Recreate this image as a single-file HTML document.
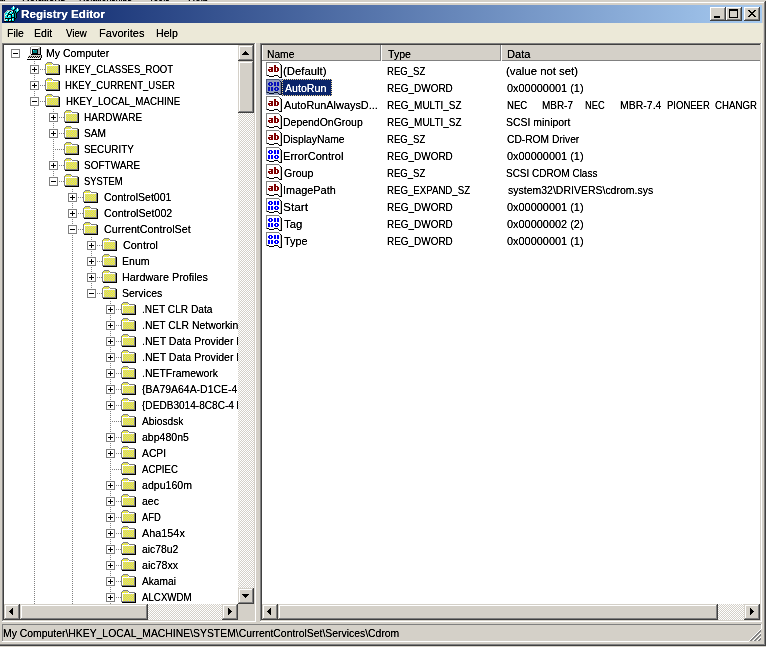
<!DOCTYPE html><html><head><meta charset="utf-8"><style>html,body{margin:0;padding:0;}body{width:766px;height:647px;overflow:hidden;position:relative;background:#D4D0C8;}.t{position:absolute;white-space:pre;transform-origin:0 0;filter:url(#tb);font-family:"Liberation Sans",sans-serif;font-size:11px;color:#000;}svg{position:absolute;left:0;top:0;}</style></head><body><svg width="766" height="647" viewBox="0 0 766 647" shape-rendering="crispEdges"><rect x="0" y="0" width="766" height="647" fill="#D4D0C8"/><rect x="0" y="2" width="764" height="1" fill="#FFFFFF"/><rect x="764" y="2" width="1" height="643" fill="#808080"/><rect x="765" y="1" width="1" height="645" fill="#404040"/><rect x="0" y="644" width="765" height="1" fill="#808080"/><rect x="0" y="645" width="766" height="1" fill="#404040"/><defs><linearGradient id="tg" x1="0" x2="1" y1="0" y2="0"><stop offset="0" stop-color="#0A246A"/><stop offset="1" stop-color="#A6CAF0"/></linearGradient><pattern id="dots" width="2" height="2" patternUnits="userSpaceOnUse"><rect x="1" y="0" width="1" height="1" fill="#808080"/><rect x="0" y="1" width="1" height="1" fill="#808080"/></pattern><pattern id="vd" width="2" height="2" patternUnits="userSpaceOnUse"><rect x="0" y="1" width="2" height="1" fill="#808080"/></pattern><pattern id="hdE" width="2" height="2" patternUnits="userSpaceOnUse"><rect x="0" y="0" width="1" height="2" fill="#808080"/></pattern><pattern id="hdO" width="2" height="2" patternUnits="userSpaceOnUse"><rect x="1" y="0" width="1" height="2" fill="#808080"/></pattern><pattern id="chk" width="2" height="2" patternUnits="userSpaceOnUse"><rect width="2" height="2" fill="#D4D0C8"/><rect x="0" y="0" width="1" height="1" fill="#fff"/><rect x="1" y="1" width="1" height="1" fill="#fff"/></pattern><pattern id="ychk" width="2" height="2" patternUnits="userSpaceOnUse"><rect width="2" height="2" fill="#C0C0C0"/><rect x="1" y="0" width="1" height="1" fill="#FFFF00"/><rect x="0" y="1" width="1" height="1" fill="#FFFF00"/></pattern><filter id="tb" x="0" y="0" width="100%" height="100%" color-interpolation-filters="sRGB"><feComponentTransfer><feFuncA type="linear" slope="1.5" intercept="-0.05"/></feComponentTransfer></filter></defs><rect x="2" y="5" width="760" height="18" fill="url(#tg)"/><rect x="13" y="6" width="1" height="1" fill="#F0FFFF"/><rect x="12" y="7" width="1" height="1" fill="#00E0E0"/><rect x="13" y="7" width="1" height="1" fill="#F0FFFF"/><rect x="14" y="7" width="1" height="1" fill="#00E0E0"/><rect x="11" y="8" width="1" height="1" fill="#00E0E0"/><rect x="12" y="8" width="1" height="1" fill="#00E0E0"/><rect x="13" y="8" width="1" height="1" fill="#F0FFFF"/><rect x="14" y="8" width="1" height="1" fill="#00E0E0"/><rect x="15" y="8" width="1" height="1" fill="#000000"/><rect x="17" y="8" width="1" height="1" fill="#F0FFFF"/><rect x="12" y="9" width="1" height="1" fill="#00E0E0"/><rect x="13" y="9" width="1" height="1" fill="#00E0E0"/><rect x="14" y="9" width="1" height="1" fill="#000000"/><rect x="16" y="9" width="1" height="1" fill="#00E0E0"/><rect x="17" y="9" width="1" height="1" fill="#F0FFFF"/><rect x="18" y="9" width="1" height="1" fill="#00E0E0"/><rect x="7" y="10" width="1" height="1" fill="#C8B8B0"/><rect x="8" y="10" width="1" height="1" fill="#C8B8B0"/><rect x="9" y="10" width="1" height="1" fill="#C8B8B0"/><rect x="10" y="10" width="1" height="1" fill="#C8B8B0"/><rect x="11" y="10" width="1" height="1" fill="#C8B8B0"/><rect x="13" y="10" width="1" height="1" fill="#000000"/><rect x="15" y="10" width="1" height="1" fill="#00E0E0"/><rect x="16" y="10" width="1" height="1" fill="#00E0E0"/><rect x="17" y="10" width="1" height="1" fill="#F0FFFF"/><rect x="18" y="10" width="1" height="1" fill="#00E0E0"/><rect x="19" y="10" width="1" height="1" fill="#000000"/><rect x="6" y="11" width="1" height="1" fill="#C8B8B0"/><rect x="7" y="11" width="1" height="1" fill="#00E0E0"/><rect x="8" y="11" width="1" height="1" fill="#F0FFFF"/><rect x="9" y="11" width="1" height="1" fill="#00E0E0"/><rect x="10" y="11" width="1" height="1" fill="#000000"/><rect x="11" y="11" width="1" height="1" fill="#00E0E0"/><rect x="12" y="11" width="1" height="1" fill="#F0FFFF"/><rect x="13" y="11" width="1" height="1" fill="#000000"/><rect x="14" y="11" width="1" height="1" fill="#009090"/><rect x="15" y="11" width="1" height="1" fill="#000000"/><rect x="16" y="11" width="1" height="1" fill="#00E0E0"/><rect x="17" y="11" width="1" height="1" fill="#00E0E0"/><rect x="18" y="11" width="1" height="1" fill="#000000"/><rect x="5" y="12" width="1" height="1" fill="#C8B8B0"/><rect x="6" y="12" width="1" height="1" fill="#00E0E0"/><rect x="7" y="12" width="1" height="1" fill="#F0FFFF"/><rect x="8" y="12" width="1" height="1" fill="#00E0E0"/><rect x="9" y="12" width="1" height="1" fill="#000000"/><rect x="10" y="12" width="1" height="1" fill="#F0FFFF"/><rect x="11" y="12" width="1" height="1" fill="#00E0E0"/><rect x="12" y="12" width="1" height="1" fill="#00E0E0"/><rect x="13" y="12" width="1" height="1" fill="#000000"/><rect x="14" y="12" width="1" height="1" fill="#009090"/><rect x="15" y="12" width="1" height="1" fill="#000000"/><rect x="16" y="12" width="1" height="1" fill="#009090"/><rect x="17" y="12" width="1" height="1" fill="#000000"/><rect x="4" y="13" width="1" height="1" fill="#C8B8B0"/><rect x="5" y="13" width="1" height="1" fill="#00E0E0"/><rect x="6" y="13" width="1" height="1" fill="#00E0E0"/><rect x="7" y="13" width="1" height="1" fill="#00E0E0"/><rect x="8" y="13" width="1" height="1" fill="#000000"/><rect x="9" y="13" width="1" height="1" fill="#00E0E0"/><rect x="10" y="13" width="1" height="1" fill="#00E0E0"/><rect x="11" y="13" width="1" height="1" fill="#00E0E0"/><rect x="12" y="13" width="1" height="1" fill="#000000"/><rect x="13" y="13" width="1" height="1" fill="#009090"/><rect x="14" y="13" width="1" height="1" fill="#000000"/><rect x="15" y="13" width="1" height="1" fill="#009090"/><rect x="16" y="13" width="1" height="1" fill="#000000"/><rect x="4" y="14" width="1" height="1" fill="#C8B8B0"/><rect x="5" y="14" width="1" height="1" fill="#00E0E0"/><rect x="6" y="14" width="1" height="1" fill="#F0FFFF"/><rect x="7" y="14" width="1" height="1" fill="#00E0E0"/><rect x="8" y="14" width="1" height="1" fill="#000000"/><rect x="9" y="14" width="1" height="1" fill="#000000"/><rect x="10" y="14" width="1" height="1" fill="#000000"/><rect x="11" y="14" width="1" height="1" fill="#000000"/><rect x="12" y="14" width="1" height="1" fill="#F0FFFF"/><rect x="13" y="14" width="1" height="1" fill="#00E0E0"/><rect x="14" y="14" width="1" height="1" fill="#000000"/><rect x="15" y="14" width="1" height="1" fill="#009090"/><rect x="16" y="14" width="1" height="1" fill="#000000"/><rect x="4" y="15" width="1" height="1" fill="#C8B8B0"/><rect x="5" y="15" width="1" height="1" fill="#F0FFFF"/><rect x="6" y="15" width="1" height="1" fill="#00E0E0"/><rect x="7" y="15" width="1" height="1" fill="#000000"/><rect x="8" y="15" width="1" height="1" fill="#00E0E0"/><rect x="9" y="15" width="1" height="1" fill="#F0FFFF"/><rect x="10" y="15" width="1" height="1" fill="#00E0E0"/><rect x="11" y="15" width="1" height="1" fill="#000000"/><rect x="12" y="15" width="1" height="1" fill="#00E0E0"/><rect x="13" y="15" width="1" height="1" fill="#00E0E0"/><rect x="14" y="15" width="1" height="1" fill="#000000"/><rect x="15" y="15" width="1" height="1" fill="#009090"/><rect x="16" y="15" width="1" height="1" fill="#000000"/><rect x="4" y="16" width="1" height="1" fill="#C8B8B0"/><rect x="5" y="16" width="1" height="1" fill="#00E0E0"/><rect x="6" y="16" width="1" height="1" fill="#00E0E0"/><rect x="7" y="16" width="1" height="1" fill="#000000"/><rect x="8" y="16" width="1" height="1" fill="#F0FFFF"/><rect x="9" y="16" width="1" height="1" fill="#00E0E0"/><rect x="10" y="16" width="1" height="1" fill="#00E0E0"/><rect x="11" y="16" width="1" height="1" fill="#000000"/><rect x="12" y="16" width="1" height="1" fill="#00E0E0"/><rect x="13" y="16" width="1" height="1" fill="#00E0E0"/><rect x="14" y="16" width="1" height="1" fill="#000000"/><rect x="15" y="16" width="1" height="1" fill="#009090"/><rect x="16" y="16" width="1" height="1" fill="#000000"/><rect x="4" y="17" width="1" height="1" fill="#C8B8B0"/><rect x="5" y="17" width="1" height="1" fill="#00E0E0"/><rect x="6" y="17" width="1" height="1" fill="#00E0E0"/><rect x="7" y="17" width="1" height="1" fill="#00E0E0"/><rect x="8" y="17" width="1" height="1" fill="#00E0E0"/><rect x="9" y="17" width="1" height="1" fill="#00E0E0"/><rect x="10" y="17" width="1" height="1" fill="#00E0E0"/><rect x="11" y="17" width="1" height="1" fill="#000000"/><rect x="12" y="17" width="1" height="1" fill="#000000"/><rect x="13" y="17" width="1" height="1" fill="#000000"/><rect x="14" y="17" width="1" height="1" fill="#000000"/><rect x="15" y="17" width="1" height="1" fill="#009090"/><rect x="16" y="17" width="1" height="1" fill="#000000"/><rect x="4" y="18" width="1" height="1" fill="#C8B8B0"/><rect x="5" y="18" width="1" height="1" fill="#000000"/><rect x="6" y="18" width="1" height="1" fill="#000000"/><rect x="7" y="18" width="1" height="1" fill="#000000"/><rect x="8" y="18" width="1" height="1" fill="#000000"/><rect x="9" y="18" width="1" height="1" fill="#000000"/><rect x="10" y="18" width="1" height="1" fill="#000000"/><rect x="11" y="18" width="1" height="1" fill="#000000"/><rect x="12" y="18" width="1" height="1" fill="#00E0E0"/><rect x="13" y="18" width="1" height="1" fill="#00E0E0"/><rect x="14" y="18" width="1" height="1" fill="#000000"/><rect x="15" y="18" width="1" height="1" fill="#000000"/><rect x="4" y="19" width="1" height="1" fill="#C8B8B0"/><rect x="5" y="19" width="1" height="1" fill="#00E0E0"/><rect x="6" y="19" width="1" height="1" fill="#F0FFFF"/><rect x="7" y="19" width="1" height="1" fill="#00E0E0"/><rect x="8" y="19" width="1" height="1" fill="#000000"/><rect x="9" y="19" width="1" height="1" fill="#00E0E0"/><rect x="10" y="19" width="1" height="1" fill="#F0FFFF"/><rect x="11" y="19" width="1" height="1" fill="#000000"/><rect x="12" y="19" width="1" height="1" fill="#F0FFFF"/><rect x="13" y="19" width="1" height="1" fill="#00E0E0"/><rect x="14" y="19" width="1" height="1" fill="#000000"/><rect x="4" y="20" width="1" height="1" fill="#C8B8B0"/><rect x="5" y="20" width="1" height="1" fill="#F0FFFF"/><rect x="6" y="20" width="1" height="1" fill="#00E0E0"/><rect x="7" y="20" width="1" height="1" fill="#00E0E0"/><rect x="8" y="20" width="1" height="1" fill="#000000"/><rect x="9" y="20" width="1" height="1" fill="#F0FFFF"/><rect x="10" y="20" width="1" height="1" fill="#00E0E0"/><rect x="11" y="20" width="1" height="1" fill="#000000"/><rect x="12" y="20" width="1" height="1" fill="#00E0E0"/><rect x="13" y="20" width="1" height="1" fill="#00E0E0"/><rect x="14" y="20" width="1" height="1" fill="#000000"/><rect x="4" y="21" width="1" height="1" fill="#000000"/><rect x="5" y="21" width="1" height="1" fill="#000000"/><rect x="6" y="21" width="1" height="1" fill="#000000"/><rect x="7" y="21" width="1" height="1" fill="#000000"/><rect x="8" y="21" width="1" height="1" fill="#000000"/><rect x="9" y="21" width="1" height="1" fill="#000000"/><rect x="10" y="21" width="1" height="1" fill="#000000"/><rect x="11" y="21" width="1" height="1" fill="#000000"/><rect x="12" y="21" width="1" height="1" fill="#000000"/><rect x="13" y="21" width="1" height="1" fill="#000000"/><rect x="710" y="7" width="16" height="14" fill="#D4D0C8"/><rect x="710" y="7" width="15" height="1" fill="#D4D0C8"/><rect x="710" y="7" width="1" height="13" fill="#D4D0C8"/><rect x="711" y="8" width="13" height="1" fill="#FFFFFF"/><rect x="711" y="8" width="1" height="11" fill="#FFFFFF"/><rect x="724" y="8" width="1" height="12" fill="#808080"/><rect x="711" y="19" width="14" height="1" fill="#808080"/><rect x="725" y="7" width="1" height="14" fill="#404040"/><rect x="710" y="20" width="16" height="1" fill="#404040"/><rect x="710" y="7" width="15" height="1" fill="#FFFFFF"/><rect x="710" y="7" width="1" height="13" fill="#FFFFFF"/><rect x="711" y="8" width="13" height="1" fill="#D4D0C8"/><rect x="711" y="8" width="1" height="11" fill="#D4D0C8"/><rect x="726" y="7" width="16" height="14" fill="#D4D0C8"/><rect x="726" y="7" width="15" height="1" fill="#D4D0C8"/><rect x="726" y="7" width="1" height="13" fill="#D4D0C8"/><rect x="727" y="8" width="13" height="1" fill="#FFFFFF"/><rect x="727" y="8" width="1" height="11" fill="#FFFFFF"/><rect x="740" y="8" width="1" height="12" fill="#808080"/><rect x="727" y="19" width="14" height="1" fill="#808080"/><rect x="741" y="7" width="1" height="14" fill="#404040"/><rect x="726" y="20" width="16" height="1" fill="#404040"/><rect x="726" y="7" width="15" height="1" fill="#FFFFFF"/><rect x="726" y="7" width="1" height="13" fill="#FFFFFF"/><rect x="727" y="8" width="13" height="1" fill="#D4D0C8"/><rect x="727" y="8" width="1" height="11" fill="#D4D0C8"/><rect x="744" y="7" width="16" height="14" fill="#D4D0C8"/><rect x="744" y="7" width="15" height="1" fill="#D4D0C8"/><rect x="744" y="7" width="1" height="13" fill="#D4D0C8"/><rect x="745" y="8" width="13" height="1" fill="#FFFFFF"/><rect x="745" y="8" width="1" height="11" fill="#FFFFFF"/><rect x="758" y="8" width="1" height="12" fill="#808080"/><rect x="745" y="19" width="14" height="1" fill="#808080"/><rect x="759" y="7" width="1" height="14" fill="#404040"/><rect x="744" y="20" width="16" height="1" fill="#404040"/><rect x="744" y="7" width="15" height="1" fill="#FFFFFF"/><rect x="744" y="7" width="1" height="13" fill="#FFFFFF"/><rect x="745" y="8" width="13" height="1" fill="#D4D0C8"/><rect x="745" y="8" width="1" height="11" fill="#D4D0C8"/><rect x="714" y="16" width="6" height="2" fill="#000"/><rect x="729" y="9" width="9" height="9" fill="#000"/><rect x="730" y="11" width="7" height="6" fill="#D4D0C8"/><rect x="748" y="10" width="1" height="1" fill="#000"/><rect x="749" y="10" width="1" height="1" fill="#000"/><rect x="754" y="10" width="1" height="1" fill="#000"/><rect x="755" y="10" width="1" height="1" fill="#000"/><rect x="749" y="11" width="1" height="1" fill="#000"/><rect x="750" y="11" width="1" height="1" fill="#000"/><rect x="753" y="11" width="1" height="1" fill="#000"/><rect x="754" y="11" width="1" height="1" fill="#000"/><rect x="750" y="12" width="1" height="1" fill="#000"/><rect x="751" y="12" width="1" height="1" fill="#000"/><rect x="752" y="12" width="1" height="1" fill="#000"/><rect x="753" y="12" width="1" height="1" fill="#000"/><rect x="751" y="13" width="1" height="1" fill="#000"/><rect x="752" y="13" width="1" height="1" fill="#000"/><rect x="750" y="14" width="1" height="1" fill="#000"/><rect x="751" y="14" width="1" height="1" fill="#000"/><rect x="752" y="14" width="1" height="1" fill="#000"/><rect x="753" y="14" width="1" height="1" fill="#000"/><rect x="749" y="15" width="1" height="1" fill="#000"/><rect x="750" y="15" width="1" height="1" fill="#000"/><rect x="753" y="15" width="1" height="1" fill="#000"/><rect x="754" y="15" width="1" height="1" fill="#000"/><rect x="748" y="16" width="1" height="1" fill="#000"/><rect x="749" y="16" width="1" height="1" fill="#000"/><rect x="754" y="16" width="1" height="1" fill="#000"/><rect x="755" y="16" width="1" height="1" fill="#000"/><rect x="2" y="23" width="761" height="20" fill="#ECE9D8"/><rect x="2" y="43" width="254" height="1" fill="#808080"/><rect x="2" y="43" width="1" height="579" fill="#808080"/><rect x="3" y="44" width="252" height="1" fill="#404040"/><rect x="3" y="44" width="1" height="577" fill="#404040"/><rect x="255" y="43" width="1" height="579" fill="#FFFFFF"/><rect x="2" y="621" width="254" height="1" fill="#FFFFFF"/><rect x="254" y="44" width="1" height="577" fill="#D4D0C8"/><rect x="3" y="620" width="252" height="1" fill="#D4D0C8"/><rect x="4" y="45" width="250" height="575" fill="#FFFFFF"/><rect x="238" y="45" width="16" height="559" fill="url(#chk)"/><rect x="238" y="45" width="16" height="16" fill="#D4D0C8"/><rect x="238" y="45" width="15" height="1" fill="#D4D0C8"/><rect x="238" y="45" width="1" height="15" fill="#D4D0C8"/><rect x="239" y="46" width="13" height="1" fill="#FFFFFF"/><rect x="239" y="46" width="1" height="13" fill="#FFFFFF"/><rect x="252" y="46" width="1" height="14" fill="#808080"/><rect x="239" y="59" width="14" height="1" fill="#808080"/><rect x="253" y="45" width="1" height="16" fill="#404040"/><rect x="238" y="60" width="16" height="1" fill="#404040"/><rect x="238" y="61" width="16" height="52" fill="#D4D0C8"/><rect x="238" y="61" width="15" height="1" fill="#D4D0C8"/><rect x="238" y="61" width="1" height="51" fill="#D4D0C8"/><rect x="239" y="62" width="13" height="1" fill="#FFFFFF"/><rect x="239" y="62" width="1" height="49" fill="#FFFFFF"/><rect x="252" y="62" width="1" height="50" fill="#808080"/><rect x="239" y="111" width="14" height="1" fill="#808080"/><rect x="253" y="61" width="1" height="52" fill="#404040"/><rect x="238" y="112" width="16" height="1" fill="#404040"/><rect x="238" y="588" width="16" height="16" fill="#D4D0C8"/><rect x="238" y="588" width="15" height="1" fill="#D4D0C8"/><rect x="238" y="588" width="1" height="15" fill="#D4D0C8"/><rect x="239" y="589" width="13" height="1" fill="#FFFFFF"/><rect x="239" y="589" width="1" height="13" fill="#FFFFFF"/><rect x="252" y="589" width="1" height="14" fill="#808080"/><rect x="239" y="602" width="14" height="1" fill="#808080"/><rect x="253" y="588" width="1" height="16" fill="#404040"/><rect x="238" y="603" width="16" height="1" fill="#404040"/><rect x="245" y="51" width="1" height="1" fill="#000"/><rect x="244" y="52" width="3" height="1" fill="#000"/><rect x="243" y="53" width="5" height="1" fill="#000"/><rect x="242" y="54" width="7" height="1" fill="#000"/><rect x="242" y="594" width="7" height="1" fill="#000"/><rect x="243" y="595" width="5" height="1" fill="#000"/><rect x="244" y="596" width="3" height="1" fill="#000"/><rect x="245" y="597" width="1" height="1" fill="#000"/><rect x="4" y="604" width="234" height="16" fill="url(#chk)"/><rect x="4" y="604" width="16" height="16" fill="#D4D0C8"/><rect x="4" y="604" width="15" height="1" fill="#D4D0C8"/><rect x="4" y="604" width="1" height="15" fill="#D4D0C8"/><rect x="5" y="605" width="13" height="1" fill="#FFFFFF"/><rect x="5" y="605" width="1" height="13" fill="#FFFFFF"/><rect x="18" y="605" width="1" height="14" fill="#808080"/><rect x="5" y="618" width="14" height="1" fill="#808080"/><rect x="19" y="604" width="1" height="16" fill="#404040"/><rect x="4" y="619" width="16" height="1" fill="#404040"/><rect x="20" y="604" width="128" height="16" fill="#D4D0C8"/><rect x="20" y="604" width="127" height="1" fill="#D4D0C8"/><rect x="20" y="604" width="1" height="15" fill="#D4D0C8"/><rect x="21" y="605" width="125" height="1" fill="#FFFFFF"/><rect x="21" y="605" width="1" height="13" fill="#FFFFFF"/><rect x="146" y="605" width="1" height="14" fill="#808080"/><rect x="21" y="618" width="126" height="1" fill="#808080"/><rect x="147" y="604" width="1" height="16" fill="#404040"/><rect x="20" y="619" width="128" height="1" fill="#404040"/><rect x="222" y="604" width="16" height="16" fill="#D4D0C8"/><rect x="222" y="604" width="15" height="1" fill="#D4D0C8"/><rect x="222" y="604" width="1" height="15" fill="#D4D0C8"/><rect x="223" y="605" width="13" height="1" fill="#FFFFFF"/><rect x="223" y="605" width="1" height="13" fill="#FFFFFF"/><rect x="236" y="605" width="1" height="14" fill="#808080"/><rect x="223" y="618" width="14" height="1" fill="#808080"/><rect x="237" y="604" width="1" height="16" fill="#404040"/><rect x="222" y="619" width="16" height="1" fill="#404040"/><rect x="238" y="604" width="16" height="16" fill="#D4D0C8"/><rect x="9" y="611" width="1" height="1" fill="#000"/><rect x="231" y="611" width="1" height="1" fill="#000"/><rect x="10" y="610" width="1" height="3" fill="#000"/><rect x="230" y="610" width="1" height="3" fill="#000"/><rect x="11" y="609" width="1" height="5" fill="#000"/><rect x="229" y="609" width="1" height="5" fill="#000"/><rect x="12" y="608" width="1" height="7" fill="#000"/><rect x="228" y="608" width="1" height="7" fill="#000"/><rect x="34" y="61" width="1" height="9" fill="url(#vd)"/><rect x="34" y="69" width="1" height="8" fill="url(#vd)"/><rect x="34" y="69" width="11" height="1" fill="url(#hdE)"/><rect x="34" y="77" width="1" height="9" fill="url(#vd)"/><rect x="34" y="85" width="1" height="8" fill="url(#vd)"/><rect x="34" y="85" width="11" height="1" fill="url(#hdE)"/><rect x="34" y="93" width="1" height="9" fill="url(#vd)"/><rect x="34" y="101" width="1" height="8" fill="url(#vd)"/><rect x="34" y="101" width="11" height="1" fill="url(#hdE)"/><rect x="34" y="109" width="1" height="16" fill="url(#vd)"/><rect x="53" y="109" width="1" height="9" fill="url(#vd)"/><rect x="53" y="117" width="1" height="8" fill="url(#vd)"/><rect x="53" y="117" width="11" height="1" fill="url(#hdO)"/><rect x="34" y="125" width="1" height="16" fill="url(#vd)"/><rect x="53" y="125" width="1" height="9" fill="url(#vd)"/><rect x="53" y="133" width="1" height="8" fill="url(#vd)"/><rect x="53" y="133" width="11" height="1" fill="url(#hdO)"/><rect x="34" y="141" width="1" height="16" fill="url(#vd)"/><rect x="53" y="141" width="1" height="9" fill="url(#vd)"/><rect x="53" y="149" width="1" height="8" fill="url(#vd)"/><rect x="53" y="149" width="11" height="1" fill="url(#hdO)"/><rect x="34" y="157" width="1" height="16" fill="url(#vd)"/><rect x="53" y="157" width="1" height="9" fill="url(#vd)"/><rect x="53" y="165" width="1" height="8" fill="url(#vd)"/><rect x="53" y="165" width="11" height="1" fill="url(#hdO)"/><rect x="34" y="173" width="1" height="16" fill="url(#vd)"/><rect x="53" y="173" width="1" height="9" fill="url(#vd)"/><rect x="53" y="181" width="11" height="1" fill="url(#hdO)"/><rect x="34" y="189" width="1" height="16" fill="url(#vd)"/><rect x="72" y="189" width="1" height="9" fill="url(#vd)"/><rect x="72" y="197" width="1" height="8" fill="url(#vd)"/><rect x="72" y="197" width="11" height="1" fill="url(#hdE)"/><rect x="34" y="205" width="1" height="16" fill="url(#vd)"/><rect x="72" y="205" width="1" height="9" fill="url(#vd)"/><rect x="72" y="213" width="1" height="8" fill="url(#vd)"/><rect x="72" y="213" width="11" height="1" fill="url(#hdE)"/><rect x="34" y="221" width="1" height="16" fill="url(#vd)"/><rect x="72" y="221" width="1" height="9" fill="url(#vd)"/><rect x="72" y="229" width="1" height="8" fill="url(#vd)"/><rect x="72" y="229" width="11" height="1" fill="url(#hdE)"/><rect x="34" y="237" width="1" height="16" fill="url(#vd)"/><rect x="72" y="237" width="1" height="16" fill="url(#vd)"/><rect x="91" y="237" width="1" height="9" fill="url(#vd)"/><rect x="91" y="245" width="1" height="8" fill="url(#vd)"/><rect x="91" y="245" width="11" height="1" fill="url(#hdO)"/><rect x="34" y="253" width="1" height="16" fill="url(#vd)"/><rect x="72" y="253" width="1" height="16" fill="url(#vd)"/><rect x="91" y="253" width="1" height="9" fill="url(#vd)"/><rect x="91" y="261" width="1" height="8" fill="url(#vd)"/><rect x="91" y="261" width="11" height="1" fill="url(#hdO)"/><rect x="34" y="269" width="1" height="16" fill="url(#vd)"/><rect x="72" y="269" width="1" height="16" fill="url(#vd)"/><rect x="91" y="269" width="1" height="9" fill="url(#vd)"/><rect x="91" y="277" width="1" height="8" fill="url(#vd)"/><rect x="91" y="277" width="11" height="1" fill="url(#hdO)"/><rect x="34" y="285" width="1" height="16" fill="url(#vd)"/><rect x="72" y="285" width="1" height="16" fill="url(#vd)"/><rect x="91" y="285" width="1" height="9" fill="url(#vd)"/><rect x="91" y="293" width="11" height="1" fill="url(#hdO)"/><rect x="34" y="301" width="1" height="16" fill="url(#vd)"/><rect x="72" y="301" width="1" height="16" fill="url(#vd)"/><rect x="110" y="301" width="1" height="9" fill="url(#vd)"/><rect x="110" y="309" width="1" height="8" fill="url(#vd)"/><rect x="110" y="309" width="11" height="1" fill="url(#hdE)"/><rect x="34" y="317" width="1" height="16" fill="url(#vd)"/><rect x="72" y="317" width="1" height="16" fill="url(#vd)"/><rect x="110" y="317" width="1" height="9" fill="url(#vd)"/><rect x="110" y="325" width="1" height="8" fill="url(#vd)"/><rect x="110" y="325" width="11" height="1" fill="url(#hdE)"/><rect x="34" y="333" width="1" height="16" fill="url(#vd)"/><rect x="72" y="333" width="1" height="16" fill="url(#vd)"/><rect x="110" y="333" width="1" height="9" fill="url(#vd)"/><rect x="110" y="341" width="1" height="8" fill="url(#vd)"/><rect x="110" y="341" width="11" height="1" fill="url(#hdE)"/><rect x="34" y="349" width="1" height="16" fill="url(#vd)"/><rect x="72" y="349" width="1" height="16" fill="url(#vd)"/><rect x="110" y="349" width="1" height="9" fill="url(#vd)"/><rect x="110" y="357" width="1" height="8" fill="url(#vd)"/><rect x="110" y="357" width="11" height="1" fill="url(#hdE)"/><rect x="34" y="365" width="1" height="16" fill="url(#vd)"/><rect x="72" y="365" width="1" height="16" fill="url(#vd)"/><rect x="110" y="365" width="1" height="9" fill="url(#vd)"/><rect x="110" y="373" width="1" height="8" fill="url(#vd)"/><rect x="110" y="373" width="11" height="1" fill="url(#hdE)"/><rect x="34" y="381" width="1" height="16" fill="url(#vd)"/><rect x="72" y="381" width="1" height="16" fill="url(#vd)"/><rect x="110" y="381" width="1" height="9" fill="url(#vd)"/><rect x="110" y="389" width="1" height="8" fill="url(#vd)"/><rect x="110" y="389" width="11" height="1" fill="url(#hdE)"/><rect x="34" y="397" width="1" height="16" fill="url(#vd)"/><rect x="72" y="397" width="1" height="16" fill="url(#vd)"/><rect x="110" y="397" width="1" height="9" fill="url(#vd)"/><rect x="110" y="405" width="1" height="8" fill="url(#vd)"/><rect x="110" y="405" width="11" height="1" fill="url(#hdE)"/><rect x="34" y="413" width="1" height="16" fill="url(#vd)"/><rect x="72" y="413" width="1" height="16" fill="url(#vd)"/><rect x="110" y="413" width="1" height="9" fill="url(#vd)"/><rect x="110" y="421" width="1" height="8" fill="url(#vd)"/><rect x="110" y="421" width="11" height="1" fill="url(#hdE)"/><rect x="34" y="429" width="1" height="16" fill="url(#vd)"/><rect x="72" y="429" width="1" height="16" fill="url(#vd)"/><rect x="110" y="429" width="1" height="9" fill="url(#vd)"/><rect x="110" y="437" width="1" height="8" fill="url(#vd)"/><rect x="110" y="437" width="11" height="1" fill="url(#hdE)"/><rect x="34" y="445" width="1" height="16" fill="url(#vd)"/><rect x="72" y="445" width="1" height="16" fill="url(#vd)"/><rect x="110" y="445" width="1" height="9" fill="url(#vd)"/><rect x="110" y="453" width="1" height="8" fill="url(#vd)"/><rect x="110" y="453" width="11" height="1" fill="url(#hdE)"/><rect x="34" y="461" width="1" height="16" fill="url(#vd)"/><rect x="72" y="461" width="1" height="16" fill="url(#vd)"/><rect x="110" y="461" width="1" height="9" fill="url(#vd)"/><rect x="110" y="469" width="1" height="8" fill="url(#vd)"/><rect x="110" y="469" width="11" height="1" fill="url(#hdE)"/><rect x="34" y="477" width="1" height="16" fill="url(#vd)"/><rect x="72" y="477" width="1" height="16" fill="url(#vd)"/><rect x="110" y="477" width="1" height="9" fill="url(#vd)"/><rect x="110" y="485" width="1" height="8" fill="url(#vd)"/><rect x="110" y="485" width="11" height="1" fill="url(#hdE)"/><rect x="34" y="493" width="1" height="16" fill="url(#vd)"/><rect x="72" y="493" width="1" height="16" fill="url(#vd)"/><rect x="110" y="493" width="1" height="9" fill="url(#vd)"/><rect x="110" y="501" width="1" height="8" fill="url(#vd)"/><rect x="110" y="501" width="11" height="1" fill="url(#hdE)"/><rect x="34" y="509" width="1" height="16" fill="url(#vd)"/><rect x="72" y="509" width="1" height="16" fill="url(#vd)"/><rect x="110" y="509" width="1" height="9" fill="url(#vd)"/><rect x="110" y="517" width="1" height="8" fill="url(#vd)"/><rect x="110" y="517" width="11" height="1" fill="url(#hdE)"/><rect x="34" y="525" width="1" height="16" fill="url(#vd)"/><rect x="72" y="525" width="1" height="16" fill="url(#vd)"/><rect x="110" y="525" width="1" height="9" fill="url(#vd)"/><rect x="110" y="533" width="1" height="8" fill="url(#vd)"/><rect x="110" y="533" width="11" height="1" fill="url(#hdE)"/><rect x="34" y="541" width="1" height="16" fill="url(#vd)"/><rect x="72" y="541" width="1" height="16" fill="url(#vd)"/><rect x="110" y="541" width="1" height="9" fill="url(#vd)"/><rect x="110" y="549" width="1" height="8" fill="url(#vd)"/><rect x="110" y="549" width="11" height="1" fill="url(#hdE)"/><rect x="34" y="557" width="1" height="16" fill="url(#vd)"/><rect x="72" y="557" width="1" height="16" fill="url(#vd)"/><rect x="110" y="557" width="1" height="9" fill="url(#vd)"/><rect x="110" y="565" width="1" height="8" fill="url(#vd)"/><rect x="110" y="565" width="11" height="1" fill="url(#hdE)"/><rect x="34" y="573" width="1" height="16" fill="url(#vd)"/><rect x="72" y="573" width="1" height="16" fill="url(#vd)"/><rect x="110" y="573" width="1" height="9" fill="url(#vd)"/><rect x="110" y="581" width="1" height="8" fill="url(#vd)"/><rect x="110" y="581" width="11" height="1" fill="url(#hdE)"/><rect x="34" y="589" width="1" height="15" fill="url(#vd)"/><rect x="72" y="589" width="1" height="15" fill="url(#vd)"/><rect x="110" y="589" width="1" height="9" fill="url(#vd)"/><rect x="110" y="597" width="1" height="7" fill="url(#vd)"/><rect x="110" y="597" width="11" height="1" fill="url(#hdE)"/><rect x="11" y="49" width="9" height="9" fill="#808080"/><rect x="12" y="50" width="7" height="7" fill="#FFFFFF"/><rect x="13" y="53" width="5" height="1" fill="#000"/><rect x="30" y="65" width="9" height="9" fill="#808080"/><rect x="31" y="66" width="7" height="7" fill="#FFFFFF"/><rect x="32" y="69" width="5" height="1" fill="#000"/><rect x="34" y="67" width="1" height="5" fill="#000"/><rect x="30" y="81" width="9" height="9" fill="#808080"/><rect x="31" y="82" width="7" height="7" fill="#FFFFFF"/><rect x="32" y="85" width="5" height="1" fill="#000"/><rect x="34" y="83" width="1" height="5" fill="#000"/><rect x="30" y="97" width="9" height="9" fill="#808080"/><rect x="31" y="98" width="7" height="7" fill="#FFFFFF"/><rect x="32" y="101" width="5" height="1" fill="#000"/><rect x="49" y="113" width="9" height="9" fill="#808080"/><rect x="50" y="114" width="7" height="7" fill="#FFFFFF"/><rect x="51" y="117" width="5" height="1" fill="#000"/><rect x="53" y="115" width="1" height="5" fill="#000"/><rect x="49" y="129" width="9" height="9" fill="#808080"/><rect x="50" y="130" width="7" height="7" fill="#FFFFFF"/><rect x="51" y="133" width="5" height="1" fill="#000"/><rect x="53" y="131" width="1" height="5" fill="#000"/><rect x="49" y="161" width="9" height="9" fill="#808080"/><rect x="50" y="162" width="7" height="7" fill="#FFFFFF"/><rect x="51" y="165" width="5" height="1" fill="#000"/><rect x="53" y="163" width="1" height="5" fill="#000"/><rect x="49" y="177" width="9" height="9" fill="#808080"/><rect x="50" y="178" width="7" height="7" fill="#FFFFFF"/><rect x="51" y="181" width="5" height="1" fill="#000"/><rect x="68" y="193" width="9" height="9" fill="#808080"/><rect x="69" y="194" width="7" height="7" fill="#FFFFFF"/><rect x="70" y="197" width="5" height="1" fill="#000"/><rect x="72" y="195" width="1" height="5" fill="#000"/><rect x="68" y="209" width="9" height="9" fill="#808080"/><rect x="69" y="210" width="7" height="7" fill="#FFFFFF"/><rect x="70" y="213" width="5" height="1" fill="#000"/><rect x="72" y="211" width="1" height="5" fill="#000"/><rect x="68" y="225" width="9" height="9" fill="#808080"/><rect x="69" y="226" width="7" height="7" fill="#FFFFFF"/><rect x="70" y="229" width="5" height="1" fill="#000"/><rect x="87" y="241" width="9" height="9" fill="#808080"/><rect x="88" y="242" width="7" height="7" fill="#FFFFFF"/><rect x="89" y="245" width="5" height="1" fill="#000"/><rect x="91" y="243" width="1" height="5" fill="#000"/><rect x="87" y="257" width="9" height="9" fill="#808080"/><rect x="88" y="258" width="7" height="7" fill="#FFFFFF"/><rect x="89" y="261" width="5" height="1" fill="#000"/><rect x="91" y="259" width="1" height="5" fill="#000"/><rect x="87" y="273" width="9" height="9" fill="#808080"/><rect x="88" y="274" width="7" height="7" fill="#FFFFFF"/><rect x="89" y="277" width="5" height="1" fill="#000"/><rect x="91" y="275" width="1" height="5" fill="#000"/><rect x="87" y="289" width="9" height="9" fill="#808080"/><rect x="88" y="290" width="7" height="7" fill="#FFFFFF"/><rect x="89" y="293" width="5" height="1" fill="#000"/><rect x="106" y="305" width="9" height="9" fill="#808080"/><rect x="107" y="306" width="7" height="7" fill="#FFFFFF"/><rect x="108" y="309" width="5" height="1" fill="#000"/><rect x="110" y="307" width="1" height="5" fill="#000"/><rect x="106" y="321" width="9" height="9" fill="#808080"/><rect x="107" y="322" width="7" height="7" fill="#FFFFFF"/><rect x="108" y="325" width="5" height="1" fill="#000"/><rect x="110" y="323" width="1" height="5" fill="#000"/><rect x="106" y="337" width="9" height="9" fill="#808080"/><rect x="107" y="338" width="7" height="7" fill="#FFFFFF"/><rect x="108" y="341" width="5" height="1" fill="#000"/><rect x="110" y="339" width="1" height="5" fill="#000"/><rect x="106" y="353" width="9" height="9" fill="#808080"/><rect x="107" y="354" width="7" height="7" fill="#FFFFFF"/><rect x="108" y="357" width="5" height="1" fill="#000"/><rect x="110" y="355" width="1" height="5" fill="#000"/><rect x="106" y="369" width="9" height="9" fill="#808080"/><rect x="107" y="370" width="7" height="7" fill="#FFFFFF"/><rect x="108" y="373" width="5" height="1" fill="#000"/><rect x="110" y="371" width="1" height="5" fill="#000"/><rect x="106" y="385" width="9" height="9" fill="#808080"/><rect x="107" y="386" width="7" height="7" fill="#FFFFFF"/><rect x="108" y="389" width="5" height="1" fill="#000"/><rect x="110" y="387" width="1" height="5" fill="#000"/><rect x="106" y="401" width="9" height="9" fill="#808080"/><rect x="107" y="402" width="7" height="7" fill="#FFFFFF"/><rect x="108" y="405" width="5" height="1" fill="#000"/><rect x="110" y="403" width="1" height="5" fill="#000"/><rect x="106" y="433" width="9" height="9" fill="#808080"/><rect x="107" y="434" width="7" height="7" fill="#FFFFFF"/><rect x="108" y="437" width="5" height="1" fill="#000"/><rect x="110" y="435" width="1" height="5" fill="#000"/><rect x="106" y="449" width="9" height="9" fill="#808080"/><rect x="107" y="450" width="7" height="7" fill="#FFFFFF"/><rect x="108" y="453" width="5" height="1" fill="#000"/><rect x="110" y="451" width="1" height="5" fill="#000"/><rect x="106" y="481" width="9" height="9" fill="#808080"/><rect x="107" y="482" width="7" height="7" fill="#FFFFFF"/><rect x="108" y="485" width="5" height="1" fill="#000"/><rect x="110" y="483" width="1" height="5" fill="#000"/><rect x="106" y="497" width="9" height="9" fill="#808080"/><rect x="107" y="498" width="7" height="7" fill="#FFFFFF"/><rect x="108" y="501" width="5" height="1" fill="#000"/><rect x="110" y="499" width="1" height="5" fill="#000"/><rect x="106" y="513" width="9" height="9" fill="#808080"/><rect x="107" y="514" width="7" height="7" fill="#FFFFFF"/><rect x="108" y="517" width="5" height="1" fill="#000"/><rect x="110" y="515" width="1" height="5" fill="#000"/><rect x="106" y="529" width="9" height="9" fill="#808080"/><rect x="107" y="530" width="7" height="7" fill="#FFFFFF"/><rect x="108" y="533" width="5" height="1" fill="#000"/><rect x="110" y="531" width="1" height="5" fill="#000"/><rect x="106" y="545" width="9" height="9" fill="#808080"/><rect x="107" y="546" width="7" height="7" fill="#FFFFFF"/><rect x="108" y="549" width="5" height="1" fill="#000"/><rect x="110" y="547" width="1" height="5" fill="#000"/><rect x="106" y="561" width="9" height="9" fill="#808080"/><rect x="107" y="562" width="7" height="7" fill="#FFFFFF"/><rect x="108" y="565" width="5" height="1" fill="#000"/><rect x="110" y="563" width="1" height="5" fill="#000"/><rect x="106" y="577" width="9" height="9" fill="#808080"/><rect x="107" y="578" width="7" height="7" fill="#FFFFFF"/><rect x="108" y="581" width="5" height="1" fill="#000"/><rect x="110" y="579" width="1" height="5" fill="#000"/><rect x="106" y="593" width="9" height="9" fill="#808080"/><rect x="107" y="594" width="7" height="7" fill="#FFFFFF"/><rect x="108" y="597" width="5" height="1" fill="#000"/><rect x="110" y="595" width="1" height="5" fill="#000"/><rect x="31" y="46" width="9" height="1" fill="#D4D0C8"/><rect x="30" y="47" width="1" height="7" fill="#808080"/><rect x="31" y="47" width="9" height="7" fill="#D4D0C8"/><rect x="31" y="47" width="8" height="1" fill="#FFFFFF"/><rect x="31" y="47" width="1" height="7" fill="#FFFFFF"/><rect x="32" y="48" width="6" height="1" fill="#FFFFFF"/><rect x="32" y="49" width="6" height="5" fill="#000"/><rect x="33" y="50" width="4" height="3" fill="#008080"/><rect x="33" y="50" width="1" height="1" fill="#00FFFF"/><rect x="38" y="48" width="2" height="6" fill="#B0B0B0"/><rect x="40" y="47" width="1" height="7" fill="#000"/><rect x="31" y="54" width="10" height="1" fill="#000"/><rect x="29" y="55" width="12" height="1" fill="#D4D0C8"/><rect x="41" y="55" width="1" height="3" fill="#000"/><rect x="28" y="56" width="13" height="2" fill="#D4D0C8"/><rect x="29" y="56" width="1" height="1" fill="#000"/><rect x="28" y="57" width="1" height="1" fill="#000"/><rect x="31" y="56" width="1" height="1" fill="#000"/><rect x="30" y="57" width="1" height="1" fill="#000"/><rect x="33" y="56" width="1" height="1" fill="#000"/><rect x="32" y="57" width="1" height="1" fill="#000"/><rect x="35" y="56" width="1" height="1" fill="#000"/><rect x="34" y="57" width="1" height="1" fill="#000"/><rect x="37" y="56" width="1" height="1" fill="#000"/><rect x="36" y="57" width="1" height="1" fill="#000"/><rect x="39" y="56" width="1" height="1" fill="#000"/><rect x="38" y="57" width="1" height="1" fill="#000"/><rect x="27" y="58" width="13" height="1" fill="#FFFFFF"/><rect x="40" y="58" width="1" height="1" fill="#000"/><rect x="27" y="59" width="14" height="1" fill="#000"/><rect x="47" y="62" width="5" height="1" fill="#808080"/><rect x="46" y="63" width="1" height="1" fill="#808080"/><rect x="52" y="63" width="1" height="1" fill="#808080"/><rect x="47" y="63" width="5" height="2" fill="url(#ychk)"/><rect x="46" y="64" width="1" height="1" fill="#FFFF00"/><rect x="45" y="64" width="1" height="10" fill="#808080"/><rect x="53" y="64" width="6" height="1" fill="#808080"/><rect x="46" y="65" width="13" height="1" fill="#FFFFFF"/><rect x="46" y="65" width="1" height="8" fill="#FFFFFF"/><rect x="47" y="66" width="11" height="7" fill="url(#ychk)"/><rect x="58" y="65" width="1" height="9" fill="#808080"/><rect x="45" y="73" width="14" height="1" fill="#808080"/><rect x="59" y="65" width="1" height="10" fill="#000"/><rect x="46" y="74" width="14" height="1" fill="#000"/><rect x="47" y="78" width="5" height="1" fill="#808080"/><rect x="46" y="79" width="1" height="1" fill="#808080"/><rect x="52" y="79" width="1" height="1" fill="#808080"/><rect x="47" y="79" width="5" height="2" fill="url(#ychk)"/><rect x="46" y="80" width="1" height="1" fill="#FFFF00"/><rect x="45" y="80" width="1" height="10" fill="#808080"/><rect x="53" y="80" width="6" height="1" fill="#808080"/><rect x="46" y="81" width="13" height="1" fill="#FFFFFF"/><rect x="46" y="81" width="1" height="8" fill="#FFFFFF"/><rect x="47" y="82" width="11" height="7" fill="url(#ychk)"/><rect x="58" y="81" width="1" height="9" fill="#808080"/><rect x="45" y="89" width="14" height="1" fill="#808080"/><rect x="59" y="81" width="1" height="10" fill="#000"/><rect x="46" y="90" width="14" height="1" fill="#000"/><rect x="47" y="94" width="5" height="1" fill="#808080"/><rect x="46" y="95" width="1" height="1" fill="#808080"/><rect x="52" y="95" width="1" height="1" fill="#808080"/><rect x="47" y="95" width="5" height="2" fill="url(#ychk)"/><rect x="46" y="96" width="1" height="1" fill="#FFFF00"/><rect x="45" y="96" width="1" height="10" fill="#808080"/><rect x="53" y="96" width="6" height="1" fill="#808080"/><rect x="46" y="97" width="13" height="1" fill="#FFFFFF"/><rect x="46" y="97" width="1" height="8" fill="#FFFFFF"/><rect x="47" y="98" width="11" height="7" fill="url(#ychk)"/><rect x="58" y="97" width="1" height="9" fill="#808080"/><rect x="45" y="105" width="14" height="1" fill="#808080"/><rect x="59" y="97" width="1" height="10" fill="#000"/><rect x="46" y="106" width="14" height="1" fill="#000"/><rect x="66" y="110" width="5" height="1" fill="#808080"/><rect x="65" y="111" width="1" height="1" fill="#808080"/><rect x="71" y="111" width="1" height="1" fill="#808080"/><rect x="66" y="111" width="5" height="2" fill="url(#ychk)"/><rect x="65" y="112" width="1" height="1" fill="#FFFF00"/><rect x="64" y="112" width="1" height="10" fill="#808080"/><rect x="72" y="112" width="6" height="1" fill="#808080"/><rect x="65" y="113" width="13" height="1" fill="#FFFFFF"/><rect x="65" y="113" width="1" height="8" fill="#FFFFFF"/><rect x="66" y="114" width="11" height="7" fill="url(#ychk)"/><rect x="77" y="113" width="1" height="9" fill="#808080"/><rect x="64" y="121" width="14" height="1" fill="#808080"/><rect x="78" y="113" width="1" height="10" fill="#000"/><rect x="65" y="122" width="14" height="1" fill="#000"/><rect x="66" y="126" width="5" height="1" fill="#808080"/><rect x="65" y="127" width="1" height="1" fill="#808080"/><rect x="71" y="127" width="1" height="1" fill="#808080"/><rect x="66" y="127" width="5" height="2" fill="url(#ychk)"/><rect x="65" y="128" width="1" height="1" fill="#FFFF00"/><rect x="64" y="128" width="1" height="10" fill="#808080"/><rect x="72" y="128" width="6" height="1" fill="#808080"/><rect x="65" y="129" width="13" height="1" fill="#FFFFFF"/><rect x="65" y="129" width="1" height="8" fill="#FFFFFF"/><rect x="66" y="130" width="11" height="7" fill="url(#ychk)"/><rect x="77" y="129" width="1" height="9" fill="#808080"/><rect x="64" y="137" width="14" height="1" fill="#808080"/><rect x="78" y="129" width="1" height="10" fill="#000"/><rect x="65" y="138" width="14" height="1" fill="#000"/><rect x="66" y="142" width="5" height="1" fill="#808080"/><rect x="65" y="143" width="1" height="1" fill="#808080"/><rect x="71" y="143" width="1" height="1" fill="#808080"/><rect x="66" y="143" width="5" height="2" fill="url(#ychk)"/><rect x="65" y="144" width="1" height="1" fill="#FFFF00"/><rect x="64" y="144" width="1" height="10" fill="#808080"/><rect x="72" y="144" width="6" height="1" fill="#808080"/><rect x="65" y="145" width="13" height="1" fill="#FFFFFF"/><rect x="65" y="145" width="1" height="8" fill="#FFFFFF"/><rect x="66" y="146" width="11" height="7" fill="url(#ychk)"/><rect x="77" y="145" width="1" height="9" fill="#808080"/><rect x="64" y="153" width="14" height="1" fill="#808080"/><rect x="78" y="145" width="1" height="10" fill="#000"/><rect x="65" y="154" width="14" height="1" fill="#000"/><rect x="66" y="158" width="5" height="1" fill="#808080"/><rect x="65" y="159" width="1" height="1" fill="#808080"/><rect x="71" y="159" width="1" height="1" fill="#808080"/><rect x="66" y="159" width="5" height="2" fill="url(#ychk)"/><rect x="65" y="160" width="1" height="1" fill="#FFFF00"/><rect x="64" y="160" width="1" height="10" fill="#808080"/><rect x="72" y="160" width="6" height="1" fill="#808080"/><rect x="65" y="161" width="13" height="1" fill="#FFFFFF"/><rect x="65" y="161" width="1" height="8" fill="#FFFFFF"/><rect x="66" y="162" width="11" height="7" fill="url(#ychk)"/><rect x="77" y="161" width="1" height="9" fill="#808080"/><rect x="64" y="169" width="14" height="1" fill="#808080"/><rect x="78" y="161" width="1" height="10" fill="#000"/><rect x="65" y="170" width="14" height="1" fill="#000"/><rect x="66" y="174" width="5" height="1" fill="#808080"/><rect x="65" y="175" width="1" height="1" fill="#808080"/><rect x="71" y="175" width="1" height="1" fill="#808080"/><rect x="66" y="175" width="5" height="2" fill="url(#ychk)"/><rect x="65" y="176" width="1" height="1" fill="#FFFF00"/><rect x="64" y="176" width="1" height="10" fill="#808080"/><rect x="72" y="176" width="6" height="1" fill="#808080"/><rect x="65" y="177" width="13" height="1" fill="#FFFFFF"/><rect x="65" y="177" width="1" height="8" fill="#FFFFFF"/><rect x="66" y="178" width="11" height="7" fill="url(#ychk)"/><rect x="77" y="177" width="1" height="9" fill="#808080"/><rect x="64" y="185" width="14" height="1" fill="#808080"/><rect x="78" y="177" width="1" height="10" fill="#000"/><rect x="65" y="186" width="14" height="1" fill="#000"/><rect x="85" y="190" width="5" height="1" fill="#808080"/><rect x="84" y="191" width="1" height="1" fill="#808080"/><rect x="90" y="191" width="1" height="1" fill="#808080"/><rect x="85" y="191" width="5" height="2" fill="url(#ychk)"/><rect x="84" y="192" width="1" height="1" fill="#FFFF00"/><rect x="83" y="192" width="1" height="10" fill="#808080"/><rect x="91" y="192" width="6" height="1" fill="#808080"/><rect x="84" y="193" width="13" height="1" fill="#FFFFFF"/><rect x="84" y="193" width="1" height="8" fill="#FFFFFF"/><rect x="85" y="194" width="11" height="7" fill="url(#ychk)"/><rect x="96" y="193" width="1" height="9" fill="#808080"/><rect x="83" y="201" width="14" height="1" fill="#808080"/><rect x="97" y="193" width="1" height="10" fill="#000"/><rect x="84" y="202" width="14" height="1" fill="#000"/><rect x="85" y="206" width="5" height="1" fill="#808080"/><rect x="84" y="207" width="1" height="1" fill="#808080"/><rect x="90" y="207" width="1" height="1" fill="#808080"/><rect x="85" y="207" width="5" height="2" fill="url(#ychk)"/><rect x="84" y="208" width="1" height="1" fill="#FFFF00"/><rect x="83" y="208" width="1" height="10" fill="#808080"/><rect x="91" y="208" width="6" height="1" fill="#808080"/><rect x="84" y="209" width="13" height="1" fill="#FFFFFF"/><rect x="84" y="209" width="1" height="8" fill="#FFFFFF"/><rect x="85" y="210" width="11" height="7" fill="url(#ychk)"/><rect x="96" y="209" width="1" height="9" fill="#808080"/><rect x="83" y="217" width="14" height="1" fill="#808080"/><rect x="97" y="209" width="1" height="10" fill="#000"/><rect x="84" y="218" width="14" height="1" fill="#000"/><rect x="85" y="222" width="5" height="1" fill="#808080"/><rect x="84" y="223" width="1" height="1" fill="#808080"/><rect x="90" y="223" width="1" height="1" fill="#808080"/><rect x="85" y="223" width="5" height="2" fill="url(#ychk)"/><rect x="84" y="224" width="1" height="1" fill="#FFFF00"/><rect x="83" y="224" width="1" height="10" fill="#808080"/><rect x="91" y="224" width="6" height="1" fill="#808080"/><rect x="84" y="225" width="13" height="1" fill="#FFFFFF"/><rect x="84" y="225" width="1" height="8" fill="#FFFFFF"/><rect x="85" y="226" width="11" height="7" fill="url(#ychk)"/><rect x="96" y="225" width="1" height="9" fill="#808080"/><rect x="83" y="233" width="14" height="1" fill="#808080"/><rect x="97" y="225" width="1" height="10" fill="#000"/><rect x="84" y="234" width="14" height="1" fill="#000"/><rect x="104" y="238" width="5" height="1" fill="#808080"/><rect x="103" y="239" width="1" height="1" fill="#808080"/><rect x="109" y="239" width="1" height="1" fill="#808080"/><rect x="104" y="239" width="5" height="2" fill="url(#ychk)"/><rect x="103" y="240" width="1" height="1" fill="#FFFF00"/><rect x="102" y="240" width="1" height="10" fill="#808080"/><rect x="110" y="240" width="6" height="1" fill="#808080"/><rect x="103" y="241" width="13" height="1" fill="#FFFFFF"/><rect x="103" y="241" width="1" height="8" fill="#FFFFFF"/><rect x="104" y="242" width="11" height="7" fill="url(#ychk)"/><rect x="115" y="241" width="1" height="9" fill="#808080"/><rect x="102" y="249" width="14" height="1" fill="#808080"/><rect x="116" y="241" width="1" height="10" fill="#000"/><rect x="103" y="250" width="14" height="1" fill="#000"/><rect x="104" y="254" width="5" height="1" fill="#808080"/><rect x="103" y="255" width="1" height="1" fill="#808080"/><rect x="109" y="255" width="1" height="1" fill="#808080"/><rect x="104" y="255" width="5" height="2" fill="url(#ychk)"/><rect x="103" y="256" width="1" height="1" fill="#FFFF00"/><rect x="102" y="256" width="1" height="10" fill="#808080"/><rect x="110" y="256" width="6" height="1" fill="#808080"/><rect x="103" y="257" width="13" height="1" fill="#FFFFFF"/><rect x="103" y="257" width="1" height="8" fill="#FFFFFF"/><rect x="104" y="258" width="11" height="7" fill="url(#ychk)"/><rect x="115" y="257" width="1" height="9" fill="#808080"/><rect x="102" y="265" width="14" height="1" fill="#808080"/><rect x="116" y="257" width="1" height="10" fill="#000"/><rect x="103" y="266" width="14" height="1" fill="#000"/><rect x="104" y="270" width="5" height="1" fill="#808080"/><rect x="103" y="271" width="1" height="1" fill="#808080"/><rect x="109" y="271" width="1" height="1" fill="#808080"/><rect x="104" y="271" width="5" height="2" fill="url(#ychk)"/><rect x="103" y="272" width="1" height="1" fill="#FFFF00"/><rect x="102" y="272" width="1" height="10" fill="#808080"/><rect x="110" y="272" width="6" height="1" fill="#808080"/><rect x="103" y="273" width="13" height="1" fill="#FFFFFF"/><rect x="103" y="273" width="1" height="8" fill="#FFFFFF"/><rect x="104" y="274" width="11" height="7" fill="url(#ychk)"/><rect x="115" y="273" width="1" height="9" fill="#808080"/><rect x="102" y="281" width="14" height="1" fill="#808080"/><rect x="116" y="273" width="1" height="10" fill="#000"/><rect x="103" y="282" width="14" height="1" fill="#000"/><rect x="104" y="286" width="5" height="1" fill="#808080"/><rect x="103" y="287" width="1" height="1" fill="#808080"/><rect x="109" y="287" width="1" height="1" fill="#808080"/><rect x="104" y="287" width="5" height="2" fill="url(#ychk)"/><rect x="103" y="288" width="1" height="1" fill="#FFFF00"/><rect x="102" y="288" width="1" height="10" fill="#808080"/><rect x="110" y="288" width="6" height="1" fill="#808080"/><rect x="103" y="289" width="13" height="1" fill="#FFFFFF"/><rect x="103" y="289" width="1" height="8" fill="#FFFFFF"/><rect x="104" y="290" width="11" height="7" fill="url(#ychk)"/><rect x="115" y="289" width="1" height="9" fill="#808080"/><rect x="102" y="297" width="14" height="1" fill="#808080"/><rect x="116" y="289" width="1" height="10" fill="#000"/><rect x="103" y="298" width="14" height="1" fill="#000"/><rect x="123" y="302" width="5" height="1" fill="#808080"/><rect x="122" y="303" width="1" height="1" fill="#808080"/><rect x="128" y="303" width="1" height="1" fill="#808080"/><rect x="123" y="303" width="5" height="2" fill="url(#ychk)"/><rect x="122" y="304" width="1" height="1" fill="#FFFF00"/><rect x="121" y="304" width="1" height="10" fill="#808080"/><rect x="129" y="304" width="6" height="1" fill="#808080"/><rect x="122" y="305" width="13" height="1" fill="#FFFFFF"/><rect x="122" y="305" width="1" height="8" fill="#FFFFFF"/><rect x="123" y="306" width="11" height="7" fill="url(#ychk)"/><rect x="134" y="305" width="1" height="9" fill="#808080"/><rect x="121" y="313" width="14" height="1" fill="#808080"/><rect x="135" y="305" width="1" height="10" fill="#000"/><rect x="122" y="314" width="14" height="1" fill="#000"/><rect x="123" y="318" width="5" height="1" fill="#808080"/><rect x="122" y="319" width="1" height="1" fill="#808080"/><rect x="128" y="319" width="1" height="1" fill="#808080"/><rect x="123" y="319" width="5" height="2" fill="url(#ychk)"/><rect x="122" y="320" width="1" height="1" fill="#FFFF00"/><rect x="121" y="320" width="1" height="10" fill="#808080"/><rect x="129" y="320" width="6" height="1" fill="#808080"/><rect x="122" y="321" width="13" height="1" fill="#FFFFFF"/><rect x="122" y="321" width="1" height="8" fill="#FFFFFF"/><rect x="123" y="322" width="11" height="7" fill="url(#ychk)"/><rect x="134" y="321" width="1" height="9" fill="#808080"/><rect x="121" y="329" width="14" height="1" fill="#808080"/><rect x="135" y="321" width="1" height="10" fill="#000"/><rect x="122" y="330" width="14" height="1" fill="#000"/><rect x="123" y="334" width="5" height="1" fill="#808080"/><rect x="122" y="335" width="1" height="1" fill="#808080"/><rect x="128" y="335" width="1" height="1" fill="#808080"/><rect x="123" y="335" width="5" height="2" fill="url(#ychk)"/><rect x="122" y="336" width="1" height="1" fill="#FFFF00"/><rect x="121" y="336" width="1" height="10" fill="#808080"/><rect x="129" y="336" width="6" height="1" fill="#808080"/><rect x="122" y="337" width="13" height="1" fill="#FFFFFF"/><rect x="122" y="337" width="1" height="8" fill="#FFFFFF"/><rect x="123" y="338" width="11" height="7" fill="url(#ychk)"/><rect x="134" y="337" width="1" height="9" fill="#808080"/><rect x="121" y="345" width="14" height="1" fill="#808080"/><rect x="135" y="337" width="1" height="10" fill="#000"/><rect x="122" y="346" width="14" height="1" fill="#000"/><rect x="123" y="350" width="5" height="1" fill="#808080"/><rect x="122" y="351" width="1" height="1" fill="#808080"/><rect x="128" y="351" width="1" height="1" fill="#808080"/><rect x="123" y="351" width="5" height="2" fill="url(#ychk)"/><rect x="122" y="352" width="1" height="1" fill="#FFFF00"/><rect x="121" y="352" width="1" height="10" fill="#808080"/><rect x="129" y="352" width="6" height="1" fill="#808080"/><rect x="122" y="353" width="13" height="1" fill="#FFFFFF"/><rect x="122" y="353" width="1" height="8" fill="#FFFFFF"/><rect x="123" y="354" width="11" height="7" fill="url(#ychk)"/><rect x="134" y="353" width="1" height="9" fill="#808080"/><rect x="121" y="361" width="14" height="1" fill="#808080"/><rect x="135" y="353" width="1" height="10" fill="#000"/><rect x="122" y="362" width="14" height="1" fill="#000"/><rect x="123" y="366" width="5" height="1" fill="#808080"/><rect x="122" y="367" width="1" height="1" fill="#808080"/><rect x="128" y="367" width="1" height="1" fill="#808080"/><rect x="123" y="367" width="5" height="2" fill="url(#ychk)"/><rect x="122" y="368" width="1" height="1" fill="#FFFF00"/><rect x="121" y="368" width="1" height="10" fill="#808080"/><rect x="129" y="368" width="6" height="1" fill="#808080"/><rect x="122" y="369" width="13" height="1" fill="#FFFFFF"/><rect x="122" y="369" width="1" height="8" fill="#FFFFFF"/><rect x="123" y="370" width="11" height="7" fill="url(#ychk)"/><rect x="134" y="369" width="1" height="9" fill="#808080"/><rect x="121" y="377" width="14" height="1" fill="#808080"/><rect x="135" y="369" width="1" height="10" fill="#000"/><rect x="122" y="378" width="14" height="1" fill="#000"/><rect x="123" y="382" width="5" height="1" fill="#808080"/><rect x="122" y="383" width="1" height="1" fill="#808080"/><rect x="128" y="383" width="1" height="1" fill="#808080"/><rect x="123" y="383" width="5" height="2" fill="url(#ychk)"/><rect x="122" y="384" width="1" height="1" fill="#FFFF00"/><rect x="121" y="384" width="1" height="10" fill="#808080"/><rect x="129" y="384" width="6" height="1" fill="#808080"/><rect x="122" y="385" width="13" height="1" fill="#FFFFFF"/><rect x="122" y="385" width="1" height="8" fill="#FFFFFF"/><rect x="123" y="386" width="11" height="7" fill="url(#ychk)"/><rect x="134" y="385" width="1" height="9" fill="#808080"/><rect x="121" y="393" width="14" height="1" fill="#808080"/><rect x="135" y="385" width="1" height="10" fill="#000"/><rect x="122" y="394" width="14" height="1" fill="#000"/><rect x="123" y="398" width="5" height="1" fill="#808080"/><rect x="122" y="399" width="1" height="1" fill="#808080"/><rect x="128" y="399" width="1" height="1" fill="#808080"/><rect x="123" y="399" width="5" height="2" fill="url(#ychk)"/><rect x="122" y="400" width="1" height="1" fill="#FFFF00"/><rect x="121" y="400" width="1" height="10" fill="#808080"/><rect x="129" y="400" width="6" height="1" fill="#808080"/><rect x="122" y="401" width="13" height="1" fill="#FFFFFF"/><rect x="122" y="401" width="1" height="8" fill="#FFFFFF"/><rect x="123" y="402" width="11" height="7" fill="url(#ychk)"/><rect x="134" y="401" width="1" height="9" fill="#808080"/><rect x="121" y="409" width="14" height="1" fill="#808080"/><rect x="135" y="401" width="1" height="10" fill="#000"/><rect x="122" y="410" width="14" height="1" fill="#000"/><rect x="123" y="414" width="5" height="1" fill="#808080"/><rect x="122" y="415" width="1" height="1" fill="#808080"/><rect x="128" y="415" width="1" height="1" fill="#808080"/><rect x="123" y="415" width="5" height="2" fill="url(#ychk)"/><rect x="122" y="416" width="1" height="1" fill="#FFFF00"/><rect x="121" y="416" width="1" height="10" fill="#808080"/><rect x="129" y="416" width="6" height="1" fill="#808080"/><rect x="122" y="417" width="13" height="1" fill="#FFFFFF"/><rect x="122" y="417" width="1" height="8" fill="#FFFFFF"/><rect x="123" y="418" width="11" height="7" fill="url(#ychk)"/><rect x="134" y="417" width="1" height="9" fill="#808080"/><rect x="121" y="425" width="14" height="1" fill="#808080"/><rect x="135" y="417" width="1" height="10" fill="#000"/><rect x="122" y="426" width="14" height="1" fill="#000"/><rect x="123" y="430" width="5" height="1" fill="#808080"/><rect x="122" y="431" width="1" height="1" fill="#808080"/><rect x="128" y="431" width="1" height="1" fill="#808080"/><rect x="123" y="431" width="5" height="2" fill="url(#ychk)"/><rect x="122" y="432" width="1" height="1" fill="#FFFF00"/><rect x="121" y="432" width="1" height="10" fill="#808080"/><rect x="129" y="432" width="6" height="1" fill="#808080"/><rect x="122" y="433" width="13" height="1" fill="#FFFFFF"/><rect x="122" y="433" width="1" height="8" fill="#FFFFFF"/><rect x="123" y="434" width="11" height="7" fill="url(#ychk)"/><rect x="134" y="433" width="1" height="9" fill="#808080"/><rect x="121" y="441" width="14" height="1" fill="#808080"/><rect x="135" y="433" width="1" height="10" fill="#000"/><rect x="122" y="442" width="14" height="1" fill="#000"/><rect x="123" y="446" width="5" height="1" fill="#808080"/><rect x="122" y="447" width="1" height="1" fill="#808080"/><rect x="128" y="447" width="1" height="1" fill="#808080"/><rect x="123" y="447" width="5" height="2" fill="url(#ychk)"/><rect x="122" y="448" width="1" height="1" fill="#FFFF00"/><rect x="121" y="448" width="1" height="10" fill="#808080"/><rect x="129" y="448" width="6" height="1" fill="#808080"/><rect x="122" y="449" width="13" height="1" fill="#FFFFFF"/><rect x="122" y="449" width="1" height="8" fill="#FFFFFF"/><rect x="123" y="450" width="11" height="7" fill="url(#ychk)"/><rect x="134" y="449" width="1" height="9" fill="#808080"/><rect x="121" y="457" width="14" height="1" fill="#808080"/><rect x="135" y="449" width="1" height="10" fill="#000"/><rect x="122" y="458" width="14" height="1" fill="#000"/><rect x="123" y="462" width="5" height="1" fill="#808080"/><rect x="122" y="463" width="1" height="1" fill="#808080"/><rect x="128" y="463" width="1" height="1" fill="#808080"/><rect x="123" y="463" width="5" height="2" fill="url(#ychk)"/><rect x="122" y="464" width="1" height="1" fill="#FFFF00"/><rect x="121" y="464" width="1" height="10" fill="#808080"/><rect x="129" y="464" width="6" height="1" fill="#808080"/><rect x="122" y="465" width="13" height="1" fill="#FFFFFF"/><rect x="122" y="465" width="1" height="8" fill="#FFFFFF"/><rect x="123" y="466" width="11" height="7" fill="url(#ychk)"/><rect x="134" y="465" width="1" height="9" fill="#808080"/><rect x="121" y="473" width="14" height="1" fill="#808080"/><rect x="135" y="465" width="1" height="10" fill="#000"/><rect x="122" y="474" width="14" height="1" fill="#000"/><rect x="123" y="478" width="5" height="1" fill="#808080"/><rect x="122" y="479" width="1" height="1" fill="#808080"/><rect x="128" y="479" width="1" height="1" fill="#808080"/><rect x="123" y="479" width="5" height="2" fill="url(#ychk)"/><rect x="122" y="480" width="1" height="1" fill="#FFFF00"/><rect x="121" y="480" width="1" height="10" fill="#808080"/><rect x="129" y="480" width="6" height="1" fill="#808080"/><rect x="122" y="481" width="13" height="1" fill="#FFFFFF"/><rect x="122" y="481" width="1" height="8" fill="#FFFFFF"/><rect x="123" y="482" width="11" height="7" fill="url(#ychk)"/><rect x="134" y="481" width="1" height="9" fill="#808080"/><rect x="121" y="489" width="14" height="1" fill="#808080"/><rect x="135" y="481" width="1" height="10" fill="#000"/><rect x="122" y="490" width="14" height="1" fill="#000"/><rect x="123" y="494" width="5" height="1" fill="#808080"/><rect x="122" y="495" width="1" height="1" fill="#808080"/><rect x="128" y="495" width="1" height="1" fill="#808080"/><rect x="123" y="495" width="5" height="2" fill="url(#ychk)"/><rect x="122" y="496" width="1" height="1" fill="#FFFF00"/><rect x="121" y="496" width="1" height="10" fill="#808080"/><rect x="129" y="496" width="6" height="1" fill="#808080"/><rect x="122" y="497" width="13" height="1" fill="#FFFFFF"/><rect x="122" y="497" width="1" height="8" fill="#FFFFFF"/><rect x="123" y="498" width="11" height="7" fill="url(#ychk)"/><rect x="134" y="497" width="1" height="9" fill="#808080"/><rect x="121" y="505" width="14" height="1" fill="#808080"/><rect x="135" y="497" width="1" height="10" fill="#000"/><rect x="122" y="506" width="14" height="1" fill="#000"/><rect x="123" y="510" width="5" height="1" fill="#808080"/><rect x="122" y="511" width="1" height="1" fill="#808080"/><rect x="128" y="511" width="1" height="1" fill="#808080"/><rect x="123" y="511" width="5" height="2" fill="url(#ychk)"/><rect x="122" y="512" width="1" height="1" fill="#FFFF00"/><rect x="121" y="512" width="1" height="10" fill="#808080"/><rect x="129" y="512" width="6" height="1" fill="#808080"/><rect x="122" y="513" width="13" height="1" fill="#FFFFFF"/><rect x="122" y="513" width="1" height="8" fill="#FFFFFF"/><rect x="123" y="514" width="11" height="7" fill="url(#ychk)"/><rect x="134" y="513" width="1" height="9" fill="#808080"/><rect x="121" y="521" width="14" height="1" fill="#808080"/><rect x="135" y="513" width="1" height="10" fill="#000"/><rect x="122" y="522" width="14" height="1" fill="#000"/><rect x="123" y="526" width="5" height="1" fill="#808080"/><rect x="122" y="527" width="1" height="1" fill="#808080"/><rect x="128" y="527" width="1" height="1" fill="#808080"/><rect x="123" y="527" width="5" height="2" fill="url(#ychk)"/><rect x="122" y="528" width="1" height="1" fill="#FFFF00"/><rect x="121" y="528" width="1" height="10" fill="#808080"/><rect x="129" y="528" width="6" height="1" fill="#808080"/><rect x="122" y="529" width="13" height="1" fill="#FFFFFF"/><rect x="122" y="529" width="1" height="8" fill="#FFFFFF"/><rect x="123" y="530" width="11" height="7" fill="url(#ychk)"/><rect x="134" y="529" width="1" height="9" fill="#808080"/><rect x="121" y="537" width="14" height="1" fill="#808080"/><rect x="135" y="529" width="1" height="10" fill="#000"/><rect x="122" y="538" width="14" height="1" fill="#000"/><rect x="123" y="542" width="5" height="1" fill="#808080"/><rect x="122" y="543" width="1" height="1" fill="#808080"/><rect x="128" y="543" width="1" height="1" fill="#808080"/><rect x="123" y="543" width="5" height="2" fill="url(#ychk)"/><rect x="122" y="544" width="1" height="1" fill="#FFFF00"/><rect x="121" y="544" width="1" height="10" fill="#808080"/><rect x="129" y="544" width="6" height="1" fill="#808080"/><rect x="122" y="545" width="13" height="1" fill="#FFFFFF"/><rect x="122" y="545" width="1" height="8" fill="#FFFFFF"/><rect x="123" y="546" width="11" height="7" fill="url(#ychk)"/><rect x="134" y="545" width="1" height="9" fill="#808080"/><rect x="121" y="553" width="14" height="1" fill="#808080"/><rect x="135" y="545" width="1" height="10" fill="#000"/><rect x="122" y="554" width="14" height="1" fill="#000"/><rect x="123" y="558" width="5" height="1" fill="#808080"/><rect x="122" y="559" width="1" height="1" fill="#808080"/><rect x="128" y="559" width="1" height="1" fill="#808080"/><rect x="123" y="559" width="5" height="2" fill="url(#ychk)"/><rect x="122" y="560" width="1" height="1" fill="#FFFF00"/><rect x="121" y="560" width="1" height="10" fill="#808080"/><rect x="129" y="560" width="6" height="1" fill="#808080"/><rect x="122" y="561" width="13" height="1" fill="#FFFFFF"/><rect x="122" y="561" width="1" height="8" fill="#FFFFFF"/><rect x="123" y="562" width="11" height="7" fill="url(#ychk)"/><rect x="134" y="561" width="1" height="9" fill="#808080"/><rect x="121" y="569" width="14" height="1" fill="#808080"/><rect x="135" y="561" width="1" height="10" fill="#000"/><rect x="122" y="570" width="14" height="1" fill="#000"/><rect x="123" y="574" width="5" height="1" fill="#808080"/><rect x="122" y="575" width="1" height="1" fill="#808080"/><rect x="128" y="575" width="1" height="1" fill="#808080"/><rect x="123" y="575" width="5" height="2" fill="url(#ychk)"/><rect x="122" y="576" width="1" height="1" fill="#FFFF00"/><rect x="121" y="576" width="1" height="10" fill="#808080"/><rect x="129" y="576" width="6" height="1" fill="#808080"/><rect x="122" y="577" width="13" height="1" fill="#FFFFFF"/><rect x="122" y="577" width="1" height="8" fill="#FFFFFF"/><rect x="123" y="578" width="11" height="7" fill="url(#ychk)"/><rect x="134" y="577" width="1" height="9" fill="#808080"/><rect x="121" y="585" width="14" height="1" fill="#808080"/><rect x="135" y="577" width="1" height="10" fill="#000"/><rect x="122" y="586" width="14" height="1" fill="#000"/><rect x="123" y="590" width="5" height="1" fill="#808080"/><rect x="122" y="591" width="1" height="1" fill="#808080"/><rect x="128" y="591" width="1" height="1" fill="#808080"/><rect x="123" y="591" width="5" height="2" fill="url(#ychk)"/><rect x="122" y="592" width="1" height="1" fill="#FFFF00"/><rect x="121" y="592" width="1" height="10" fill="#808080"/><rect x="129" y="592" width="6" height="1" fill="#808080"/><rect x="122" y="593" width="13" height="1" fill="#FFFFFF"/><rect x="122" y="593" width="1" height="8" fill="#FFFFFF"/><rect x="123" y="594" width="11" height="7" fill="url(#ychk)"/><rect x="134" y="593" width="1" height="9" fill="#808080"/><rect x="121" y="601" width="14" height="1" fill="#808080"/><rect x="135" y="593" width="1" height="10" fill="#000"/><rect x="122" y="602" width="14" height="1" fill="#000"/><rect x="237" y="337" width="1" height="8" fill="#000"/><rect x="237" y="353" width="1" height="8" fill="#000"/><rect x="237" y="401" width="1" height="8" fill="#000"/><rect x="260" y="43" width="502" height="1" fill="#808080"/><rect x="260" y="43" width="1" height="579" fill="#808080"/><rect x="261" y="44" width="500" height="1" fill="#404040"/><rect x="261" y="44" width="1" height="577" fill="#404040"/><rect x="761" y="43" width="1" height="579" fill="#FFFFFF"/><rect x="260" y="621" width="502" height="1" fill="#FFFFFF"/><rect x="760" y="44" width="1" height="577" fill="#D4D0C8"/><rect x="261" y="620" width="500" height="1" fill="#D4D0C8"/><rect x="262" y="45" width="498" height="575" fill="#FFFFFF"/><rect x="262" y="45" width="498" height="16" fill="#D4D0C8"/><rect x="262" y="60" width="498" height="1" fill="#808080"/><rect x="262" y="45" width="1" height="15" fill="#FFFFFF"/><rect x="381" y="45" width="1" height="15" fill="#FFFFFF"/><rect x="501" y="45" width="1" height="15" fill="#FFFFFF"/><rect x="380" y="45" width="1" height="16" fill="#808080"/><rect x="500" y="45" width="1" height="16" fill="#808080"/><rect x="381" y="60" width="1" height="1" fill="#FFFFFF"/><rect x="501" y="60" width="1" height="1" fill="#FFFFFF"/><rect x="262" y="604" width="498" height="16" fill="url(#chk)"/><rect x="262" y="604" width="16" height="16" fill="#D4D0C8"/><rect x="262" y="604" width="15" height="1" fill="#D4D0C8"/><rect x="262" y="604" width="1" height="15" fill="#D4D0C8"/><rect x="263" y="605" width="13" height="1" fill="#FFFFFF"/><rect x="263" y="605" width="1" height="13" fill="#FFFFFF"/><rect x="276" y="605" width="1" height="14" fill="#808080"/><rect x="263" y="618" width="14" height="1" fill="#808080"/><rect x="277" y="604" width="1" height="16" fill="#404040"/><rect x="262" y="619" width="16" height="1" fill="#404040"/><rect x="278" y="604" width="440" height="16" fill="#D4D0C8"/><rect x="278" y="604" width="439" height="1" fill="#D4D0C8"/><rect x="278" y="604" width="1" height="15" fill="#D4D0C8"/><rect x="279" y="605" width="437" height="1" fill="#FFFFFF"/><rect x="279" y="605" width="1" height="13" fill="#FFFFFF"/><rect x="716" y="605" width="1" height="14" fill="#808080"/><rect x="279" y="618" width="438" height="1" fill="#808080"/><rect x="717" y="604" width="1" height="16" fill="#404040"/><rect x="278" y="619" width="440" height="1" fill="#404040"/><rect x="744" y="604" width="16" height="16" fill="#D4D0C8"/><rect x="744" y="604" width="15" height="1" fill="#D4D0C8"/><rect x="744" y="604" width="1" height="15" fill="#D4D0C8"/><rect x="745" y="605" width="13" height="1" fill="#FFFFFF"/><rect x="745" y="605" width="1" height="13" fill="#FFFFFF"/><rect x="758" y="605" width="1" height="14" fill="#808080"/><rect x="745" y="618" width="14" height="1" fill="#808080"/><rect x="759" y="604" width="1" height="16" fill="#404040"/><rect x="744" y="619" width="16" height="1" fill="#404040"/><rect x="267" y="611" width="1" height="1" fill="#000"/><rect x="753" y="611" width="1" height="1" fill="#000"/><rect x="268" y="610" width="1" height="3" fill="#000"/><rect x="752" y="610" width="1" height="3" fill="#000"/><rect x="269" y="609" width="1" height="5" fill="#000"/><rect x="751" y="609" width="1" height="5" fill="#000"/><rect x="270" y="608" width="1" height="7" fill="#000"/><rect x="750" y="608" width="1" height="7" fill="#000"/><rect x="266" y="62" width="13" height="14" fill="#FFFFFF"/><rect x="279" y="64" width="2" height="13" fill="#FFFFFF"/><rect x="266" y="62" width="13" height="1" fill="#808080"/><rect x="266" y="62" width="1" height="14" fill="#808080"/><rect x="279" y="63" width="1" height="1" fill="#808080"/><rect x="280" y="64" width="1" height="1" fill="#000"/><rect x="281" y="65" width="1" height="13" fill="#000"/><rect x="280" y="65" width="1" height="12" fill="#D4D0C8"/><rect x="267" y="75" width="2" height="1" fill="#000"/><rect x="269" y="76" width="5" height="1" fill="#000"/><rect x="274" y="75" width="4" height="1" fill="#000"/><rect x="278" y="76" width="1" height="1" fill="#000"/><rect x="279" y="77" width="3" height="1" fill="#000"/><rect x="269" y="67" width="4" height="1" fill="#800000"/><rect x="271" y="68" width="2" height="1" fill="#800000"/><rect x="268" y="69" width="5" height="1" fill="#800000"/><rect x="268" y="70" width="2" height="1" fill="#800000"/><rect x="271" y="70" width="2" height="1" fill="#800000"/><rect x="269" y="71" width="4" height="1" fill="#800000"/><rect x="274" y="65" width="2" height="7" fill="#800000"/><rect x="276" y="67" width="2" height="1" fill="#800000"/><rect x="276" y="71" width="2" height="1" fill="#800000"/><rect x="277" y="68" width="2" height="3" fill="#800000"/><rect x="282" y="79" width="50" height="17" fill="#0A246A"/><rect x="266" y="79" width="13" height="14" fill="#FFFFFF"/><rect x="279" y="81" width="2" height="13" fill="#FFFFFF"/><rect x="266" y="79" width="13" height="1" fill="#808080"/><rect x="266" y="79" width="1" height="14" fill="#808080"/><rect x="279" y="80" width="1" height="1" fill="#808080"/><rect x="280" y="81" width="1" height="1" fill="#000"/><rect x="281" y="82" width="1" height="13" fill="#000"/><rect x="280" y="82" width="1" height="12" fill="#D4D0C8"/><rect x="267" y="92" width="2" height="1" fill="#000"/><rect x="269" y="93" width="5" height="1" fill="#000"/><rect x="274" y="92" width="4" height="1" fill="#000"/><rect x="278" y="93" width="1" height="1" fill="#000"/><rect x="279" y="94" width="3" height="1" fill="#000"/><rect x="269" y="82" width="3" height="1" fill="#0000FF"/><rect x="268" y="83" width="2" height="2" fill="#0000FF"/><rect x="271" y="83" width="2" height="2" fill="#0000FF"/><rect x="269" y="85" width="3" height="1" fill="#0000FF"/><rect x="274" y="82" width="2" height="4" fill="#0000FF"/><rect x="277" y="82" width="2" height="4" fill="#0000FF"/><rect x="268" y="87" width="2" height="4" fill="#0000FF"/><rect x="271" y="87" width="2" height="4" fill="#0000FF"/><rect x="275" y="87" width="3" height="1" fill="#0000FF"/><rect x="274" y="88" width="2" height="2" fill="#0000FF"/><rect x="277" y="88" width="2" height="2" fill="#0000FF"/><rect x="275" y="90" width="3" height="1" fill="#0000FF"/><rect x="266" y="79" width="16" height="16" fill="#0A246A" fill-opacity="0.45"/><rect x="283" y="79" width="1" height="1" fill="#F5DB95"/><rect x="283" y="95" width="1" height="1" fill="#F5DB95"/><rect x="285" y="79" width="1" height="1" fill="#F5DB95"/><rect x="285" y="95" width="1" height="1" fill="#F5DB95"/><rect x="287" y="79" width="1" height="1" fill="#F5DB95"/><rect x="287" y="95" width="1" height="1" fill="#F5DB95"/><rect x="289" y="79" width="1" height="1" fill="#F5DB95"/><rect x="289" y="95" width="1" height="1" fill="#F5DB95"/><rect x="291" y="79" width="1" height="1" fill="#F5DB95"/><rect x="291" y="95" width="1" height="1" fill="#F5DB95"/><rect x="293" y="79" width="1" height="1" fill="#F5DB95"/><rect x="293" y="95" width="1" height="1" fill="#F5DB95"/><rect x="295" y="79" width="1" height="1" fill="#F5DB95"/><rect x="295" y="95" width="1" height="1" fill="#F5DB95"/><rect x="297" y="79" width="1" height="1" fill="#F5DB95"/><rect x="297" y="95" width="1" height="1" fill="#F5DB95"/><rect x="299" y="79" width="1" height="1" fill="#F5DB95"/><rect x="299" y="95" width="1" height="1" fill="#F5DB95"/><rect x="301" y="79" width="1" height="1" fill="#F5DB95"/><rect x="301" y="95" width="1" height="1" fill="#F5DB95"/><rect x="303" y="79" width="1" height="1" fill="#F5DB95"/><rect x="303" y="95" width="1" height="1" fill="#F5DB95"/><rect x="305" y="79" width="1" height="1" fill="#F5DB95"/><rect x="305" y="95" width="1" height="1" fill="#F5DB95"/><rect x="307" y="79" width="1" height="1" fill="#F5DB95"/><rect x="307" y="95" width="1" height="1" fill="#F5DB95"/><rect x="309" y="79" width="1" height="1" fill="#F5DB95"/><rect x="309" y="95" width="1" height="1" fill="#F5DB95"/><rect x="311" y="79" width="1" height="1" fill="#F5DB95"/><rect x="311" y="95" width="1" height="1" fill="#F5DB95"/><rect x="313" y="79" width="1" height="1" fill="#F5DB95"/><rect x="313" y="95" width="1" height="1" fill="#F5DB95"/><rect x="315" y="79" width="1" height="1" fill="#F5DB95"/><rect x="315" y="95" width="1" height="1" fill="#F5DB95"/><rect x="317" y="79" width="1" height="1" fill="#F5DB95"/><rect x="317" y="95" width="1" height="1" fill="#F5DB95"/><rect x="319" y="79" width="1" height="1" fill="#F5DB95"/><rect x="319" y="95" width="1" height="1" fill="#F5DB95"/><rect x="321" y="79" width="1" height="1" fill="#F5DB95"/><rect x="321" y="95" width="1" height="1" fill="#F5DB95"/><rect x="323" y="79" width="1" height="1" fill="#F5DB95"/><rect x="323" y="95" width="1" height="1" fill="#F5DB95"/><rect x="325" y="79" width="1" height="1" fill="#F5DB95"/><rect x="325" y="95" width="1" height="1" fill="#F5DB95"/><rect x="327" y="79" width="1" height="1" fill="#F5DB95"/><rect x="327" y="95" width="1" height="1" fill="#F5DB95"/><rect x="329" y="79" width="1" height="1" fill="#F5DB95"/><rect x="329" y="95" width="1" height="1" fill="#F5DB95"/><rect x="331" y="79" width="1" height="1" fill="#F5DB95"/><rect x="331" y="95" width="1" height="1" fill="#F5DB95"/><rect x="331" y="79" width="1" height="1" fill="#F5DB95"/><rect x="282" y="80" width="1" height="1" fill="#F5DB95"/><rect x="331" y="81" width="1" height="1" fill="#F5DB95"/><rect x="282" y="82" width="1" height="1" fill="#F5DB95"/><rect x="331" y="83" width="1" height="1" fill="#F5DB95"/><rect x="282" y="84" width="1" height="1" fill="#F5DB95"/><rect x="331" y="85" width="1" height="1" fill="#F5DB95"/><rect x="282" y="86" width="1" height="1" fill="#F5DB95"/><rect x="331" y="87" width="1" height="1" fill="#F5DB95"/><rect x="282" y="88" width="1" height="1" fill="#F5DB95"/><rect x="331" y="89" width="1" height="1" fill="#F5DB95"/><rect x="282" y="90" width="1" height="1" fill="#F5DB95"/><rect x="331" y="91" width="1" height="1" fill="#F5DB95"/><rect x="282" y="92" width="1" height="1" fill="#F5DB95"/><rect x="331" y="93" width="1" height="1" fill="#F5DB95"/><rect x="282" y="94" width="1" height="1" fill="#F5DB95"/><rect x="331" y="95" width="1" height="1" fill="#F5DB95"/><rect x="266" y="96" width="13" height="14" fill="#FFFFFF"/><rect x="279" y="98" width="2" height="13" fill="#FFFFFF"/><rect x="266" y="96" width="13" height="1" fill="#808080"/><rect x="266" y="96" width="1" height="14" fill="#808080"/><rect x="279" y="97" width="1" height="1" fill="#808080"/><rect x="280" y="98" width="1" height="1" fill="#000"/><rect x="281" y="99" width="1" height="13" fill="#000"/><rect x="280" y="99" width="1" height="12" fill="#D4D0C8"/><rect x="267" y="109" width="2" height="1" fill="#000"/><rect x="269" y="110" width="5" height="1" fill="#000"/><rect x="274" y="109" width="4" height="1" fill="#000"/><rect x="278" y="110" width="1" height="1" fill="#000"/><rect x="279" y="111" width="3" height="1" fill="#000"/><rect x="269" y="101" width="4" height="1" fill="#800000"/><rect x="271" y="102" width="2" height="1" fill="#800000"/><rect x="268" y="103" width="5" height="1" fill="#800000"/><rect x="268" y="104" width="2" height="1" fill="#800000"/><rect x="271" y="104" width="2" height="1" fill="#800000"/><rect x="269" y="105" width="4" height="1" fill="#800000"/><rect x="274" y="99" width="2" height="7" fill="#800000"/><rect x="276" y="101" width="2" height="1" fill="#800000"/><rect x="276" y="105" width="2" height="1" fill="#800000"/><rect x="277" y="102" width="2" height="3" fill="#800000"/><rect x="266" y="113" width="13" height="14" fill="#FFFFFF"/><rect x="279" y="115" width="2" height="13" fill="#FFFFFF"/><rect x="266" y="113" width="13" height="1" fill="#808080"/><rect x="266" y="113" width="1" height="14" fill="#808080"/><rect x="279" y="114" width="1" height="1" fill="#808080"/><rect x="280" y="115" width="1" height="1" fill="#000"/><rect x="281" y="116" width="1" height="13" fill="#000"/><rect x="280" y="116" width="1" height="12" fill="#D4D0C8"/><rect x="267" y="126" width="2" height="1" fill="#000"/><rect x="269" y="127" width="5" height="1" fill="#000"/><rect x="274" y="126" width="4" height="1" fill="#000"/><rect x="278" y="127" width="1" height="1" fill="#000"/><rect x="279" y="128" width="3" height="1" fill="#000"/><rect x="269" y="118" width="4" height="1" fill="#800000"/><rect x="271" y="119" width="2" height="1" fill="#800000"/><rect x="268" y="120" width="5" height="1" fill="#800000"/><rect x="268" y="121" width="2" height="1" fill="#800000"/><rect x="271" y="121" width="2" height="1" fill="#800000"/><rect x="269" y="122" width="4" height="1" fill="#800000"/><rect x="274" y="116" width="2" height="7" fill="#800000"/><rect x="276" y="118" width="2" height="1" fill="#800000"/><rect x="276" y="122" width="2" height="1" fill="#800000"/><rect x="277" y="119" width="2" height="3" fill="#800000"/><rect x="266" y="130" width="13" height="14" fill="#FFFFFF"/><rect x="279" y="132" width="2" height="13" fill="#FFFFFF"/><rect x="266" y="130" width="13" height="1" fill="#808080"/><rect x="266" y="130" width="1" height="14" fill="#808080"/><rect x="279" y="131" width="1" height="1" fill="#808080"/><rect x="280" y="132" width="1" height="1" fill="#000"/><rect x="281" y="133" width="1" height="13" fill="#000"/><rect x="280" y="133" width="1" height="12" fill="#D4D0C8"/><rect x="267" y="143" width="2" height="1" fill="#000"/><rect x="269" y="144" width="5" height="1" fill="#000"/><rect x="274" y="143" width="4" height="1" fill="#000"/><rect x="278" y="144" width="1" height="1" fill="#000"/><rect x="279" y="145" width="3" height="1" fill="#000"/><rect x="269" y="135" width="4" height="1" fill="#800000"/><rect x="271" y="136" width="2" height="1" fill="#800000"/><rect x="268" y="137" width="5" height="1" fill="#800000"/><rect x="268" y="138" width="2" height="1" fill="#800000"/><rect x="271" y="138" width="2" height="1" fill="#800000"/><rect x="269" y="139" width="4" height="1" fill="#800000"/><rect x="274" y="133" width="2" height="7" fill="#800000"/><rect x="276" y="135" width="2" height="1" fill="#800000"/><rect x="276" y="139" width="2" height="1" fill="#800000"/><rect x="277" y="136" width="2" height="3" fill="#800000"/><rect x="266" y="147" width="13" height="14" fill="#FFFFFF"/><rect x="279" y="149" width="2" height="13" fill="#FFFFFF"/><rect x="266" y="147" width="13" height="1" fill="#808080"/><rect x="266" y="147" width="1" height="14" fill="#808080"/><rect x="279" y="148" width="1" height="1" fill="#808080"/><rect x="280" y="149" width="1" height="1" fill="#000"/><rect x="281" y="150" width="1" height="13" fill="#000"/><rect x="280" y="150" width="1" height="12" fill="#D4D0C8"/><rect x="267" y="160" width="2" height="1" fill="#000"/><rect x="269" y="161" width="5" height="1" fill="#000"/><rect x="274" y="160" width="4" height="1" fill="#000"/><rect x="278" y="161" width="1" height="1" fill="#000"/><rect x="279" y="162" width="3" height="1" fill="#000"/><rect x="269" y="150" width="3" height="1" fill="#0000FF"/><rect x="268" y="151" width="2" height="2" fill="#0000FF"/><rect x="271" y="151" width="2" height="2" fill="#0000FF"/><rect x="269" y="153" width="3" height="1" fill="#0000FF"/><rect x="274" y="150" width="2" height="4" fill="#0000FF"/><rect x="277" y="150" width="2" height="4" fill="#0000FF"/><rect x="268" y="155" width="2" height="4" fill="#0000FF"/><rect x="271" y="155" width="2" height="4" fill="#0000FF"/><rect x="275" y="155" width="3" height="1" fill="#0000FF"/><rect x="274" y="156" width="2" height="2" fill="#0000FF"/><rect x="277" y="156" width="2" height="2" fill="#0000FF"/><rect x="275" y="158" width="3" height="1" fill="#0000FF"/><rect x="266" y="164" width="13" height="14" fill="#FFFFFF"/><rect x="279" y="166" width="2" height="13" fill="#FFFFFF"/><rect x="266" y="164" width="13" height="1" fill="#808080"/><rect x="266" y="164" width="1" height="14" fill="#808080"/><rect x="279" y="165" width="1" height="1" fill="#808080"/><rect x="280" y="166" width="1" height="1" fill="#000"/><rect x="281" y="167" width="1" height="13" fill="#000"/><rect x="280" y="167" width="1" height="12" fill="#D4D0C8"/><rect x="267" y="177" width="2" height="1" fill="#000"/><rect x="269" y="178" width="5" height="1" fill="#000"/><rect x="274" y="177" width="4" height="1" fill="#000"/><rect x="278" y="178" width="1" height="1" fill="#000"/><rect x="279" y="179" width="3" height="1" fill="#000"/><rect x="269" y="169" width="4" height="1" fill="#800000"/><rect x="271" y="170" width="2" height="1" fill="#800000"/><rect x="268" y="171" width="5" height="1" fill="#800000"/><rect x="268" y="172" width="2" height="1" fill="#800000"/><rect x="271" y="172" width="2" height="1" fill="#800000"/><rect x="269" y="173" width="4" height="1" fill="#800000"/><rect x="274" y="167" width="2" height="7" fill="#800000"/><rect x="276" y="169" width="2" height="1" fill="#800000"/><rect x="276" y="173" width="2" height="1" fill="#800000"/><rect x="277" y="170" width="2" height="3" fill="#800000"/><rect x="266" y="181" width="13" height="14" fill="#FFFFFF"/><rect x="279" y="183" width="2" height="13" fill="#FFFFFF"/><rect x="266" y="181" width="13" height="1" fill="#808080"/><rect x="266" y="181" width="1" height="14" fill="#808080"/><rect x="279" y="182" width="1" height="1" fill="#808080"/><rect x="280" y="183" width="1" height="1" fill="#000"/><rect x="281" y="184" width="1" height="13" fill="#000"/><rect x="280" y="184" width="1" height="12" fill="#D4D0C8"/><rect x="267" y="194" width="2" height="1" fill="#000"/><rect x="269" y="195" width="5" height="1" fill="#000"/><rect x="274" y="194" width="4" height="1" fill="#000"/><rect x="278" y="195" width="1" height="1" fill="#000"/><rect x="279" y="196" width="3" height="1" fill="#000"/><rect x="269" y="186" width="4" height="1" fill="#800000"/><rect x="271" y="187" width="2" height="1" fill="#800000"/><rect x="268" y="188" width="5" height="1" fill="#800000"/><rect x="268" y="189" width="2" height="1" fill="#800000"/><rect x="271" y="189" width="2" height="1" fill="#800000"/><rect x="269" y="190" width="4" height="1" fill="#800000"/><rect x="274" y="184" width="2" height="7" fill="#800000"/><rect x="276" y="186" width="2" height="1" fill="#800000"/><rect x="276" y="190" width="2" height="1" fill="#800000"/><rect x="277" y="187" width="2" height="3" fill="#800000"/><rect x="266" y="198" width="13" height="14" fill="#FFFFFF"/><rect x="279" y="200" width="2" height="13" fill="#FFFFFF"/><rect x="266" y="198" width="13" height="1" fill="#808080"/><rect x="266" y="198" width="1" height="14" fill="#808080"/><rect x="279" y="199" width="1" height="1" fill="#808080"/><rect x="280" y="200" width="1" height="1" fill="#000"/><rect x="281" y="201" width="1" height="13" fill="#000"/><rect x="280" y="201" width="1" height="12" fill="#D4D0C8"/><rect x="267" y="211" width="2" height="1" fill="#000"/><rect x="269" y="212" width="5" height="1" fill="#000"/><rect x="274" y="211" width="4" height="1" fill="#000"/><rect x="278" y="212" width="1" height="1" fill="#000"/><rect x="279" y="213" width="3" height="1" fill="#000"/><rect x="269" y="201" width="3" height="1" fill="#0000FF"/><rect x="268" y="202" width="2" height="2" fill="#0000FF"/><rect x="271" y="202" width="2" height="2" fill="#0000FF"/><rect x="269" y="204" width="3" height="1" fill="#0000FF"/><rect x="274" y="201" width="2" height="4" fill="#0000FF"/><rect x="277" y="201" width="2" height="4" fill="#0000FF"/><rect x="268" y="206" width="2" height="4" fill="#0000FF"/><rect x="271" y="206" width="2" height="4" fill="#0000FF"/><rect x="275" y="206" width="3" height="1" fill="#0000FF"/><rect x="274" y="207" width="2" height="2" fill="#0000FF"/><rect x="277" y="207" width="2" height="2" fill="#0000FF"/><rect x="275" y="209" width="3" height="1" fill="#0000FF"/><rect x="266" y="215" width="13" height="14" fill="#FFFFFF"/><rect x="279" y="217" width="2" height="13" fill="#FFFFFF"/><rect x="266" y="215" width="13" height="1" fill="#808080"/><rect x="266" y="215" width="1" height="14" fill="#808080"/><rect x="279" y="216" width="1" height="1" fill="#808080"/><rect x="280" y="217" width="1" height="1" fill="#000"/><rect x="281" y="218" width="1" height="13" fill="#000"/><rect x="280" y="218" width="1" height="12" fill="#D4D0C8"/><rect x="267" y="228" width="2" height="1" fill="#000"/><rect x="269" y="229" width="5" height="1" fill="#000"/><rect x="274" y="228" width="4" height="1" fill="#000"/><rect x="278" y="229" width="1" height="1" fill="#000"/><rect x="279" y="230" width="3" height="1" fill="#000"/><rect x="269" y="218" width="3" height="1" fill="#0000FF"/><rect x="268" y="219" width="2" height="2" fill="#0000FF"/><rect x="271" y="219" width="2" height="2" fill="#0000FF"/><rect x="269" y="221" width="3" height="1" fill="#0000FF"/><rect x="274" y="218" width="2" height="4" fill="#0000FF"/><rect x="277" y="218" width="2" height="4" fill="#0000FF"/><rect x="268" y="223" width="2" height="4" fill="#0000FF"/><rect x="271" y="223" width="2" height="4" fill="#0000FF"/><rect x="275" y="223" width="3" height="1" fill="#0000FF"/><rect x="274" y="224" width="2" height="2" fill="#0000FF"/><rect x="277" y="224" width="2" height="2" fill="#0000FF"/><rect x="275" y="226" width="3" height="1" fill="#0000FF"/><rect x="266" y="232" width="13" height="14" fill="#FFFFFF"/><rect x="279" y="234" width="2" height="13" fill="#FFFFFF"/><rect x="266" y="232" width="13" height="1" fill="#808080"/><rect x="266" y="232" width="1" height="14" fill="#808080"/><rect x="279" y="233" width="1" height="1" fill="#808080"/><rect x="280" y="234" width="1" height="1" fill="#000"/><rect x="281" y="235" width="1" height="13" fill="#000"/><rect x="280" y="235" width="1" height="12" fill="#D4D0C8"/><rect x="267" y="245" width="2" height="1" fill="#000"/><rect x="269" y="246" width="5" height="1" fill="#000"/><rect x="274" y="245" width="4" height="1" fill="#000"/><rect x="278" y="246" width="1" height="1" fill="#000"/><rect x="279" y="247" width="3" height="1" fill="#000"/><rect x="269" y="235" width="3" height="1" fill="#0000FF"/><rect x="268" y="236" width="2" height="2" fill="#0000FF"/><rect x="271" y="236" width="2" height="2" fill="#0000FF"/><rect x="269" y="238" width="3" height="1" fill="#0000FF"/><rect x="274" y="235" width="2" height="4" fill="#0000FF"/><rect x="277" y="235" width="2" height="4" fill="#0000FF"/><rect x="268" y="240" width="2" height="4" fill="#0000FF"/><rect x="271" y="240" width="2" height="4" fill="#0000FF"/><rect x="275" y="240" width="3" height="1" fill="#0000FF"/><rect x="274" y="241" width="2" height="2" fill="#0000FF"/><rect x="277" y="241" width="2" height="2" fill="#0000FF"/><rect x="275" y="243" width="3" height="1" fill="#0000FF"/><rect x="2" y="624" width="760" height="1" fill="#808080"/><rect x="2" y="624" width="1" height="18" fill="#808080"/><rect x="761" y="624" width="1" height="18" fill="#FFFFFF"/><rect x="2" y="641" width="760" height="1" fill="#FFFFFF"/><rect x="749" y="641" width="13" height="1" fill="#D4D0C8"/><rect x="761" y="629" width="1" height="13" fill="#D4D0C8"/><rect x="749" y="640" width="1" height="1" fill="#FFFFFF"/><rect x="750" y="639" width="1" height="1" fill="#FFFFFF"/><rect x="750" y="640" width="1" height="1" fill="#808080"/><rect x="751" y="638" width="1" height="1" fill="#FFFFFF"/><rect x="751" y="639" width="1" height="1" fill="#808080"/><rect x="751" y="640" width="1" height="1" fill="#808080"/><rect x="752" y="637" width="1" height="1" fill="#FFFFFF"/><rect x="752" y="638" width="1" height="1" fill="#808080"/><rect x="752" y="639" width="1" height="1" fill="#808080"/><rect x="753" y="636" width="1" height="1" fill="#FFFFFF"/><rect x="753" y="637" width="1" height="1" fill="#808080"/><rect x="753" y="638" width="1" height="1" fill="#808080"/><rect x="753" y="640" width="1" height="1" fill="#FFFFFF"/><rect x="754" y="635" width="1" height="1" fill="#FFFFFF"/><rect x="754" y="636" width="1" height="1" fill="#808080"/><rect x="754" y="637" width="1" height="1" fill="#808080"/><rect x="754" y="639" width="1" height="1" fill="#FFFFFF"/><rect x="754" y="640" width="1" height="1" fill="#808080"/><rect x="755" y="634" width="1" height="1" fill="#FFFFFF"/><rect x="755" y="635" width="1" height="1" fill="#808080"/><rect x="755" y="636" width="1" height="1" fill="#808080"/><rect x="755" y="638" width="1" height="1" fill="#FFFFFF"/><rect x="755" y="639" width="1" height="1" fill="#808080"/><rect x="755" y="640" width="1" height="1" fill="#808080"/><rect x="756" y="633" width="1" height="1" fill="#FFFFFF"/><rect x="756" y="634" width="1" height="1" fill="#808080"/><rect x="756" y="635" width="1" height="1" fill="#808080"/><rect x="756" y="637" width="1" height="1" fill="#FFFFFF"/><rect x="756" y="638" width="1" height="1" fill="#808080"/><rect x="756" y="639" width="1" height="1" fill="#808080"/><rect x="757" y="632" width="1" height="1" fill="#FFFFFF"/><rect x="757" y="633" width="1" height="1" fill="#808080"/><rect x="757" y="634" width="1" height="1" fill="#808080"/><rect x="757" y="636" width="1" height="1" fill="#FFFFFF"/><rect x="757" y="637" width="1" height="1" fill="#808080"/><rect x="757" y="638" width="1" height="1" fill="#808080"/><rect x="757" y="640" width="1" height="1" fill="#FFFFFF"/><rect x="758" y="631" width="1" height="1" fill="#FFFFFF"/><rect x="758" y="632" width="1" height="1" fill="#808080"/><rect x="758" y="633" width="1" height="1" fill="#808080"/><rect x="758" y="635" width="1" height="1" fill="#FFFFFF"/><rect x="758" y="636" width="1" height="1" fill="#808080"/><rect x="758" y="637" width="1" height="1" fill="#808080"/><rect x="758" y="639" width="1" height="1" fill="#FFFFFF"/><rect x="758" y="640" width="1" height="1" fill="#808080"/><rect x="759" y="630" width="1" height="1" fill="#FFFFFF"/><rect x="759" y="631" width="1" height="1" fill="#808080"/><rect x="759" y="632" width="1" height="1" fill="#808080"/><rect x="759" y="634" width="1" height="1" fill="#FFFFFF"/><rect x="759" y="635" width="1" height="1" fill="#808080"/><rect x="759" y="636" width="1" height="1" fill="#808080"/><rect x="759" y="638" width="1" height="1" fill="#FFFFFF"/><rect x="759" y="639" width="1" height="1" fill="#808080"/><rect x="759" y="640" width="1" height="1" fill="#808080"/><rect x="760" y="629" width="1" height="1" fill="#FFFFFF"/><rect x="760" y="630" width="1" height="1" fill="#808080"/><rect x="760" y="631" width="1" height="1" fill="#808080"/><rect x="760" y="633" width="1" height="1" fill="#FFFFFF"/><rect x="760" y="634" width="1" height="1" fill="#808080"/><rect x="760" y="635" width="1" height="1" fill="#808080"/><rect x="760" y="637" width="1" height="1" fill="#FFFFFF"/><rect x="760" y="638" width="1" height="1" fill="#808080"/><rect x="760" y="639" width="1" height="1" fill="#808080"/></svg><div style="position:absolute;left:0;top:0;width:210px;height:1px;overflow:hidden"><div class="t" style="left:-3px;top:-9px;line-height:13px">ar</div><div class="t" style="left:22px;top:-9px;line-height:13px;transform:scaleX(0.95)">Relations</div><div class="t" style="left:79px;top:-9px;line-height:13px;transform:scaleX(0.8)">Relationships</div><div class="t" style="left:149px;top:-9px;line-height:13px;transform:scaleX(0.8)">Tools</div><div class="t" style="left:188px;top:-9px;line-height:13px;transform:scaleX(0.9)">Help</div></div><div class="t" style="left:20.84px;top:6px;line-height:16px;transform:scaleX(1.0628);color:#fff;font-weight:bold">Registry Editor</div><div class="t" style="left:6.74px;top:25px;line-height:16px;transform:scaleX(0.9563);">File</div><div class="t" style="left:34.44px;top:25px;line-height:16px;transform:scaleX(0.9611);">Edit</div><div class="t" style="left:65.80px;top:25px;line-height:16px;transform:scaleX(0.8750);">View</div><div class="t" style="left:98.69px;top:25px;line-height:16px;transform:scaleX(1.0068);">Favorites</div><div class="t" style="left:155.74px;top:25px;line-height:16px;transform:scaleX(0.9619);">Help</div><div class="t" style="left:266.97px;top:46px;line-height:16px;transform:scaleX(0.9321);">Name</div><div class="t" style="left:387.80px;top:46px;line-height:16px;transform:scaleX(0.9625);">Type</div><div class="t" style="left:506.79px;top:46px;line-height:16px;transform:scaleX(1.0136);">Data</div><div class="t" style="left:282.57px;top:63px;line-height:16px;transform:scaleX(1.0317);">(Default)</div><div class="t" style="left:386.83px;top:63px;line-height:16px;transform:scaleX(0.8698);">REG_SZ</div><div class="t" style="left:506.37px;top:63px;line-height:16px;transform:scaleX(1.0338);">(value not set)</div><div class="t" style="left:284.50px;top:80px;line-height:16px;transform:scaleX(0.9643);color:#fff;">AutoRun</div><div class="t" style="left:386.80px;top:80px;line-height:16px;transform:scaleX(0.9042);">REG_DWORD</div><div class="t" style="left:507.40px;top:80px;line-height:16px;transform:scaleX(0.9935);">0x00000001 (1)</div><div class="t" style="left:284.00px;top:97px;line-height:16px;transform:scaleX(0.9894);">AutoRunAlwaysD...</div><div class="t" style="left:386.80px;top:97px;line-height:16px;transform:scaleX(0.9049);">REG_MULTI_SZ</div><div class="t" style="left:283.05px;top:114px;line-height:16px;transform:scaleX(0.9518);">DependOnGroup</div><div class="t" style="left:386.80px;top:114px;line-height:16px;transform:scaleX(0.9049);">REG_MULTI_SZ</div><div class="t" style="left:506.45px;top:114px;line-height:16px;transform:scaleX(0.9507);">SCSI miniport</div><div class="t" style="left:282.76px;top:131px;line-height:16px;transform:scaleX(0.9422);">DisplayName</div><div class="t" style="left:386.83px;top:131px;line-height:16px;transform:scaleX(0.8698);">REG_SZ</div><div class="t" style="left:507.40px;top:131px;line-height:16px;transform:scaleX(0.9308);">CD-ROM Driver</div><div class="t" style="left:282.69px;top:148px;line-height:16px;transform:scaleX(1.0086);">ErrorControl</div><div class="t" style="left:386.80px;top:148px;line-height:16px;transform:scaleX(0.9042);">REG_DWORD</div><div class="t" style="left:507.40px;top:148px;line-height:16px;transform:scaleX(0.9935);">0x00000001 (1)</div><div class="t" style="left:283.70px;top:165px;line-height:16px;transform:scaleX(0.9600);">Group</div><div class="t" style="left:386.83px;top:165px;line-height:16px;transform:scaleX(0.8698);">REG_SZ</div><div class="t" style="left:506.49px;top:165px;line-height:16px;transform:scaleX(0.9060);">SCSI CDROM Class</div><div class="t" style="left:282.71px;top:182px;line-height:16px;transform:scaleX(0.9923);">ImagePath</div><div class="t" style="left:386.92px;top:182px;line-height:16px;transform:scaleX(0.8785);">REG_EXPAND_SZ</div><div class="t" style="left:507.60px;top:182px;line-height:16px;transform:scaleX(0.9539);">system32\DRIVERS\cdrom.sys</div><div class="t" style="left:282.62px;top:199px;line-height:16px;transform:scaleX(1.0818);">Start</div><div class="t" style="left:386.80px;top:199px;line-height:16px;transform:scaleX(0.9042);">REG_DWORD</div><div class="t" style="left:507.40px;top:199px;line-height:16px;transform:scaleX(0.9935);">0x00000001 (1)</div><div class="t" style="left:283.70px;top:216px;line-height:16px;transform:scaleX(1.0353);">Tag</div><div class="t" style="left:386.80px;top:216px;line-height:16px;transform:scaleX(0.9042);">REG_DWORD</div><div class="t" style="left:507.40px;top:216px;line-height:16px;transform:scaleX(0.9935);">0x00000002 (2)</div><div class="t" style="left:283.70px;top:233px;line-height:16px;transform:scaleX(0.9917);">Type</div><div class="t" style="left:386.80px;top:233px;line-height:16px;transform:scaleX(0.9042);">REG_DWORD</div><div class="t" style="left:507.40px;top:233px;line-height:16px;transform:scaleX(0.9935);">0x00000001 (1)</div><div class="t" style="left:506.83px;top:97px;line-height:16px;transform:scaleX(0.8727);">NEC</div><div class="t" style="left:542.10px;top:97px;line-height:16px;transform:scaleX(0.9030);">MBR-7</div><div class="t" style="left:585.45px;top:97px;line-height:16px;transform:scaleX(0.8500);">NEC</div><div class="t" style="left:620.15px;top:97px;line-height:16px;transform:scaleX(0.9548);">MBR-7.4</div><div class="t" style="left:667.14px;top:97px;line-height:16px;transform:scaleX(0.8646);">PIONEER</div><div class="t" style="left:714.60px;top:97px;line-height:16px;transform:scaleX(0.8787);">CHANGR</div><div class="t" style="left:3.06px;top:625px;line-height:16px;transform:scaleX(0.9450);">My Computer\HKEY_LOCAL_MACHINE\SYSTEM\CurrentControlSet\Services\Cdrom</div><div style="position:absolute;left:4px;top:45px;width:234px;height:559px;overflow:hidden"><div class="t" style="left:42.34px;top:0px;line-height:16px;transform:scaleX(0.9569)">My Computer</div><div class="t" style="left:61.23px;top:16px;line-height:16px;transform:scaleX(0.8669)">HKEY_CLASSES_ROOT</div><div class="t" style="left:61.23px;top:32px;line-height:16px;transform:scaleX(0.8688)">HKEY_CURRENT_USER</div><div class="t" style="left:61.51px;top:48px;line-height:16px;transform:scaleX(0.8852)">HKEY_LOCAL_MACHINE</div><div class="t" style="left:79.69px;top:64px;line-height:16px;transform:scaleX(0.9111)">HARDWARE</div><div class="t" style="left:79.67px;top:80px;line-height:16px;transform:scaleX(0.9273)">SAM</div><div class="t" style="left:79.71px;top:96px;line-height:16px;transform:scaleX(0.8944)">SECURITY</div><div class="t" style="left:79.69px;top:112px;line-height:16px;transform:scaleX(0.9082)">SOFTWARE</div><div class="t" style="left:79.75px;top:128px;line-height:16px;transform:scaleX(0.8500)">SYSTEM</div><div class="t" style="left:99.80px;top:144px;line-height:16px;transform:scaleX(0.9586)">ControlSet001</div><div class="t" style="left:99.80px;top:160px;line-height:16px;transform:scaleX(0.9714)">ControlSet002</div><div class="t" style="left:99.80px;top:176px;line-height:16px;transform:scaleX(0.9775)">CurrentControlSet</div><div class="t" style="left:118.50px;top:192px;line-height:16px;transform:scaleX(0.9857)">Control</div><div class="t" style="left:117.54px;top:208px;line-height:16px;transform:scaleX(0.9593)">Enum</div><div class="t" style="left:117.72px;top:224px;line-height:16px;transform:scaleX(0.9837)">Hardware Profiles</div><div class="t" style="left:117.74px;top:240px;line-height:16px;transform:scaleX(0.9561)">Services</div><div class="t" style="left:137.67px;top:256px;line-height:16px;transform:scaleX(0.9253)">.NET CLR Data</div><div class="t" style="left:137.66px;top:272px;line-height:16px;transform:scaleX(0.9440)">.NET CLR Networkin</div><div class="t" style="left:137.64px;top:288px;line-height:16px;transform:scaleX(0.9617)">.NET Data Provider</div><div class="t" style="left:137.64px;top:304px;line-height:16px;transform:scaleX(0.9617)">.NET Data Provider </div><div class="t" style="left:137.65px;top:320px;line-height:16px;transform:scaleX(0.9494)">.NETFramework</div><div class="t" style="left:137.90px;top:336px;line-height:16px;transform:scaleX(0.9500)">{BA79A64A-D1CE-4</div><div class="t" style="left:137.90px;top:352px;line-height:16px;transform:scaleX(0.9170)">{DEDB3014-8C8C-4</div><div class="t" style="left:137.90px;top:368px;line-height:16px;transform:scaleX(0.9289)">Abiosdsk</div><div class="t" style="left:137.90px;top:384px;line-height:16px;transform:scaleX(0.9592)">abp480n5</div><div class="t" style="left:137.90px;top:400px;line-height:16px;transform:scaleX(0.9400)">ACPI</div><div class="t" style="left:137.90px;top:416px;line-height:16px;transform:scaleX(0.8756)">ACPIEC</div><div class="t" style="left:137.90px;top:432px;line-height:16px;transform:scaleX(0.9608)">adpu160m</div><div class="t" style="left:137.90px;top:448px;line-height:16px;transform:scaleX(0.9588)">aec</div><div class="t" style="left:137.90px;top:464px;line-height:16px;transform:scaleX(0.8591)">AFD</div><div class="t" style="left:137.90px;top:480px;line-height:16px;transform:scaleX(0.9860)">Aha154x</div><div class="t" style="left:137.90px;top:496px;line-height:16px;transform:scaleX(0.9447)">aic78u2</div><div class="t" style="left:137.90px;top:512px;line-height:16px;transform:scaleX(0.9703)">aic78xx</div><div class="t" style="left:137.90px;top:528px;line-height:16px;transform:scaleX(0.9250)">Akamai</div><div class="t" style="left:137.90px;top:544px;line-height:16px;transform:scaleX(0.8821)">ALCXWDM</div></div></body></html>
